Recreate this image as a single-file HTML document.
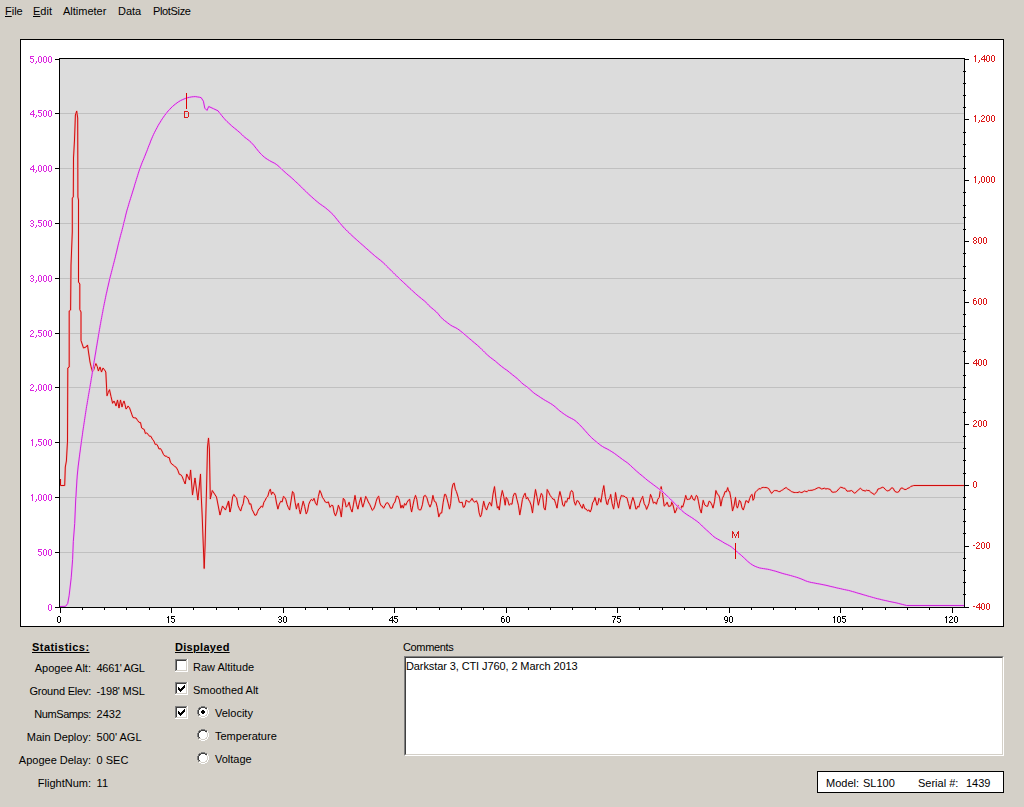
<!DOCTYPE html>
<html><head><meta charset="utf-8"><title>Altimeter</title>
<style>
html,body{margin:0;padding:0;}
body{width:1024px;height:807px;overflow:hidden;position:relative;background:#d4d0c8;font-family:"Liberation Sans", sans-serif;font-size:11px;line-height:15px;color:#000;}
</style></head><body>
<div style="position:absolute;left:5px;top:4px;white-space:pre;"><u>F</u>ile</div>
<div style="position:absolute;left:33px;top:4px;white-space:pre;"><u>E</u>dit</div>
<div style="position:absolute;left:63px;top:4px;white-space:pre;">Altimeter</div>
<div style="position:absolute;left:118px;top:4px;white-space:pre;">Data</div>
<div style="position:absolute;left:153px;top:4px;white-space:pre;"><span style="letter-spacing:-0.35px">PlotSize</span></div>
<svg width="1024" height="807" style="position:absolute;left:0;top:0"><rect x="20.5" y="39.5" width="983" height="587" fill="#fff" stroke="#000" stroke-width="1" shape-rendering="crispEdges"/><rect x="59" y="58" width="905" height="549" fill="#dcdcdc"/><line x1="60" y1="552.5" x2="964" y2="552.5" stroke="#c0c0c0" stroke-width="1"/><line x1="60" y1="497.5" x2="964" y2="497.5" stroke="#c0c0c0" stroke-width="1"/><line x1="60" y1="442.5" x2="964" y2="442.5" stroke="#c0c0c0" stroke-width="1"/><line x1="60" y1="387.5" x2="964" y2="387.5" stroke="#c0c0c0" stroke-width="1"/><line x1="60" y1="333.5" x2="964" y2="333.5" stroke="#c0c0c0" stroke-width="1"/><line x1="60" y1="278.5" x2="964" y2="278.5" stroke="#c0c0c0" stroke-width="1"/><line x1="60" y1="223.5" x2="964" y2="223.5" stroke="#c0c0c0" stroke-width="1"/><line x1="60" y1="168.5" x2="964" y2="168.5" stroke="#c0c0c0" stroke-width="1"/><line x1="60" y1="113.5" x2="964" y2="113.5" stroke="#c0c0c0" stroke-width="1"/><path d="M60.5 479.0 L60.5 485.5 L64.7 485.5 L65.3 467.0 L66.4 461.0 L67.5 441.0 L67.8 368.0 L69.2 367.0 L69.2 311.0 L70.6 310.0 L71.0 265.0 L72.3 232.0 L72.3 198.0 L73.3 197.0 L73.5 158.0 L74.5 140.0 L75.4 115.0 L76.7 111.0 L77.7 118.0 L77.9 197.0 L78.5 200.0 L78.5 282.0 L79.8 284.0 L79.8 309.6 L81.0 312.0 L81.0 340.5 L83.5 348.0 L86.0 347.0 L87.5 345.0 L88.5 352.0 M88.5 352.0 L90.0 362.0 L91.1 366.8 L92.2 371.7 L93.4 370.9 L94.7 366.5 L95.9 363.6 L97.2 366.4 L98.4 371.0 L100.0 367.0 L101.5 372.0 L103.0 368.0 L104.6 370.0 L105.8 372.0 L107.0 395.8 L108.2 392.6 L109.5 389.7 L111.0 396.5 L112.6 403.3 L114.0 401.0 L115.0 403.1 L116.0 406.0 L117.5 400.0 L119.0 408.0 L120.5 400.0 L122.0 407.0 L123.0 403.2 L124.0 401.0 L125.0 404.5 L126.0 409.0 L127.0 408.1 L128.0 406.0 L129.5 407.8 L131.0 412.0 L132.0 414.9 L133.0 417.5 L134.5 417.8 L136.0 418.0 L137.5 420.3 L139.0 422.3 L140.5 422.5 L141.7 428.0 L142.9 428.8 L144.2 429.4 L145.4 433.5 L146.7 433.0 L148.1 434.3 L149.5 436.3 L150.9 436.3 L152.4 439.2 L153.8 440.9 L155.2 444.4 L156.6 444.2 L157.8 446.0 L159.0 449.0 L160.5 448.6 L161.9 450.9 L163.4 454.3 L164.9 456.1 L166.3 456.2 L167.8 457.4 L169.2 457.6 L170.5 462.3 L171.8 464.1 L173.2 465.0 L174.7 466.4 L176.2 467.3 L177.8 470.2 L179.3 474.3 L180.8 474.7 L182.3 476.8 L183.7 480.6 L185.2 484.0 M185.2 484.0 L186.7 474.0 L189.5 480.0 L190.6 470.0 L192.5 495.0 L195.0 478.0 L197.9 500.0 L200.5 474.0 L201.2 495.0 L202.2 516.0 L203.0 538.0 L204.2 568.5 L205.1 545.0 L205.7 521.0 L206.6 486.0 L207.5 447.0 L208.5 438.0 L209.4 449.0 L210.3 499.0 L212.3 490.5 L216.5 497.0 L220.0 515.0 L222.5 506.0 L225.5 510.0 L228.5 501.0 L230.0 512.0 M228.5 501.0 L230.0 512.0 L231.3 506.6 L232.6 496.9 L233.9 494.4 L235.3 496.8 L236.6 497.8 L238.0 505.5 L239.4 508.7 L240.7 511.0 L242.0 506.4 L243.2 503.7 L244.4 495.9 L245.6 496.4 L246.9 497.9 L248.2 499.8 L249.5 504.2 L250.8 503.8 L252.1 509.6 L253.4 512.0 L254.9 515.3 L256.4 514.9 L257.6 511.5 L258.8 509.0 L260.0 508.1 L261.2 506.1 L262.6 507.2 L263.9 502.2 L265.2 500.3 L266.5 497.5 L267.8 496.3 L269.1 491.5 L270.3 489.2 L271.5 494.5 L272.7 492.0 L273.9 493.4 L275.2 495.4 L276.5 503.0 L277.9 509.1 L279.3 504.1 L280.8 501.2 L282.1 502.0 L283.4 496.5 L284.7 497.3 L285.9 499.7 L287.1 504.5 L288.3 507.5 L289.6 510.0 L291.0 501.0 L292.5 491.5 L293.8 493.4 L295.1 502.2 L296.4 509.1 L297.4 504.5 L298.4 503.2 L299.3 509.6 L300.3 513.9 L301.8 507.2 L303.2 501.2 L304.7 506.6 L306.2 513.9 L307.5 511.3 L308.8 504.2 L310.1 501.2 L311.4 499.4 L312.7 500.7 L314.0 498.3 L315.4 502.9 L316.9 505.2 L318.4 496.4 L319.8 490.5 L321.1 493.1 L322.4 497.2 L323.8 499.3 L325.3 502.0 L326.9 502.6 L328.4 501.9 L330.0 507.3 L331.6 505.2 L332.9 505.7 L334.2 512.8 L335.5 515.9 L336.9 512.0 L338.4 505.2 L339.9 509.1 L341.3 516.9 L342.3 507.5 L343.3 498.3 L344.7 500.1 L346.2 507.1 L347.7 505.6 L349.1 502.2 L350.6 508.6 L352.1 512.0 L353.5 504.1 L355.0 495.4 L356.5 504.3 L357.9 509.1 L359.4 502.2 L360.9 497.3 L361.8 503.3 L362.8 507.1 L364.3 502.3 L365.7 496.4 L367.0 498.8 L368.3 502.0 L369.6 504.2 L371.0 507.3 L372.3 510.3 L373.6 509.1 L374.9 506.0 L376.2 501.2 L377.5 497.3 L378.7 496.2 L379.9 502.9 L381.1 505.7 L382.3 506.1 L383.6 508.2 L384.9 505.7 L386.2 503.2 L387.7 502.7 L389.2 505.0 L390.6 508.3 L392.1 508.1 L393.6 503.7 L395.0 502.0 L396.5 496.2 L398.0 496.4 L399.4 500.1 L400.9 508.1 L402.1 505.2 L403.3 508.1 L404.6 503.5 L405.8 505.2 L407.1 502.3 L408.4 500.2 L409.7 499.3 L410.7 507.7 L411.6 512.0 L412.9 505.5 L414.2 499.3 L415.5 495.4 L416.8 499.3 L418.2 508.5 L419.5 510.0 L420.9 509.7 L422.4 504.8 L423.8 496.3 L425.3 495.4 L426.9 497.8 L428.4 503.4 L430.0 507.1 L431.5 503.4 L432.9 495.4 L434.4 501.4 L435.9 502.2 L437.3 507.6 L438.8 516.9 L440.3 513.1 L441.7 513.0 L443.2 502.2 L444.6 494.4 L445.6 494.4 L446.6 497.3 L448.1 503.1 L449.5 509.1 L450.7 503.3 L451.9 489.0 L453.0 484.1 L454.2 483.1 L455.3 489.2 L456.4 491.5 L457.8 496.1 L459.3 502.2 L460.8 502.6 L462.2 502.2 L463.2 507.2 L464.2 507.1 L465.2 504.8 L466.1 500.3 L467.6 501.3 L469.1 502.2 L470.5 500.9 L472.0 498.3 L473.5 501.3 L474.9 502.2 L476.4 500.7 L477.9 504.2 L479.1 512.8 L480.4 516.9 L481.5 514.5 L482.6 507.3 L483.7 501.2 L485.2 507.3 L486.6 510.0 L488.1 505.5 L489.6 502.2 L490.5 503.6 L491.5 506.1 L493.0 494.1 L494.5 486.6 L495.9 498.1 L497.4 508.1 L498.4 506.6 L499.3 510.0 L500.8 497.9 L502.3 490.5 L503.7 496.2 L505.2 505.2 L506.2 497.3 L507.6 499.4 L509.1 505.2 L510.6 503.8 L512.0 504.2 L513.2 496.3 L514.4 493.4 L515.6 493.6 L516.9 499.3 L518.4 505.2 L519.8 514.9 L521.1 507.8 L522.4 499.5 L523.8 495.4 L525.1 493.2 L526.4 499.0 L527.7 497.3 L528.6 499.9 L529.6 501.2 L531.1 505.1 L532.5 513.0 L534.0 499.9 L535.5 489.5 L536.9 496.5 L538.4 505.2 L539.9 498.5 L541.3 493.4 L542.6 495.5 L543.9 507.8 L545.2 510.0 L546.2 502.5 L547.2 489.5 L548.7 492.3 L550.1 495.4 L551.6 497.3 L553.0 499.3 L554.3 499.2 L555.7 503.7 L557.0 508.1 L558.4 498.9 L559.9 491.5 L561.3 497.0 L562.8 505.2 L564.1 506.3 L565.4 501.1 L566.7 502.2 L567.9 497.8 L569.2 498.9 L570.4 492.4 L571.6 490.5 L572.9 492.2 L574.2 501.7 L575.5 505.2 L577.0 500.6 L578.4 501.2 L579.9 504.3 L581.4 507.1 L582.3 508.3 L583.3 504.2 L584.8 508.7 L586.2 509.1 L587.6 510.9 L588.9 509.9 L590.2 512.0 L591.4 509.1 L592.6 502.8 L593.8 501.0 L595.0 497.3 L596.0 501.4 L597.0 505.2 L598.0 503.3 L598.9 498.3 L599.9 499.3 L600.9 502.2 L602.4 492.4 L603.8 485.6 L605.3 496.6 L606.8 504.2 L607.7 504.5 L608.7 499.3 L609.7 498.8 L610.7 494.4 L612.1 503.5 L613.6 509.1 L614.6 502.5 L615.5 492.5 L617.0 501.6 L618.5 508.1 L619.9 500.2 L621.4 495.4 L622.7 496.0 L624.0 496.0 L625.3 497.3 L626.9 497.6 L628.4 503.5 L630.0 509.1 L631.5 502.0 L632.9 497.3 L634.4 501.9 L635.9 509.1 L636.8 508.7 L637.8 506.1 L638.8 507.2 L639.8 503.2 L641.2 499.5 L642.7 496.4 L644.2 503.7 L645.6 506.1 L646.6 509.4 L647.6 507.1 L649.0 503.3 L650.5 494.4 L652.0 498.1 L653.4 503.2 L654.9 502.1 L656.4 504.2 L657.8 499.2 L659.3 497.3 L660.3 490.3 L661.2 486.6 L662.7 494.7 L664.2 506.1 L665.6 504.9 L667.1 502.2 L668.6 506.4 L670.0 506.1 L671.0 505.6 L672.0 501.2 L673.5 507.0 L674.9 513.0 L676.4 509.9 L677.9 505.2 L679.3 508.8 L680.8 509.1 L681.8 505.8 L682.7 507.1 L684.2 502.1 L685.7 495.4 L687.1 499.6 L688.6 499.3 L690.1 498.9 L691.5 495.4 L693.0 499.2 L694.5 500.3 L695.4 497.7 L696.4 495.4 L697.4 496.5 L698.4 501.2 L699.8 508.7 L701.3 513.0 L702.3 505.7 L703.2 500.3 L704.7 504.9 L706.2 506.1 L707.6 506.3 L709.1 501.2 L710.1 501.6 L711.1 503.2 L712.0 505.1 L713.0 508.1 L714.5 501.8 L715.9 490.5 L717.4 494.2 L718.9 495.4 L719.8 498.9 L720.8 506.1 L722.3 498.7 L723.8 495.4 L725.1 491.5 L726.4 491.8 L727.7 487.6 L728.6 491.2 L729.6 491.5 L731.1 499.3 L732.5 511.0 L734.0 506.0 L735.5 497.3 L736.4 505.4 L737.4 508.1 L738.4 505.1 L739.4 500.3 L740.7 501.9 L742.0 507.9 L743.3 510.0 L744.6 505.8 L745.9 500.7 L747.2 501.2 L748.4 502.9 L749.6 498.7 L750.8 495.6 L752.1 494.4 L753.0 500.3 L754.0 498.8 L755.0 492.5 L756.3 491.4 L757.6 490.1 L758.9 488.6 L760.4 488.9 L761.8 487.7 L763.3 487.4 L764.8 487.6 L766.1 487.5 L767.4 487.9 L768.7 488.6 L770.1 491.1 L771.6 493.4 L773.1 491.6 L774.5 490.5 L775.8 490.6 L777.1 490.7 L778.4 491.5 L779.9 491.6 L781.4 490.5 L782.6 489.9 L783.8 489.0 L785.0 488.1 L786.2 487.6 L787.6 488.9 L788.9 489.7 L790.2 490.5 L791.5 491.6 L792.8 492.0 L794.1 492.5 L795.4 492.5 L796.7 492.5 L798.0 492.5 L799.3 491.8 L800.6 492.4 L801.9 492.5 L803.2 491.8 L804.5 491.0 L805.8 491.5 L807.1 491.7 L808.4 490.3 L809.7 490.5 L810.9 490.3 L812.1 490.3 L813.3 489.8 L814.6 489.5 L815.9 488.8 L817.2 488.1 L818.5 487.6 L820.0 487.9 L821.4 488.9 L822.9 488.7 L824.4 488.2 L825.9 489.0 L827.3 488.6 L828.8 489.0 L830.3 489.5 L831.7 491.8 L833.2 492.3 L834.3 492.1 L835.4 492.0 L836.7 491.4 L837.9 490.0 L839.2 488.5 L840.5 487.3 L842.0 487.5 L843.4 488.2 L844.9 488.3 L846.0 489.8 L847.1 491.2 L848.6 491.1 L850.0 491.0 L851.5 490.5 L853.0 491.8 L854.4 493.1 L855.9 492.5 L857.4 490.7 L858.8 489.6 L860.3 488.3 L861.5 489.1 L862.7 490.5 L863.9 490.5 L865.2 491.1 L866.5 490.2 L867.8 490.6 L869.1 490.5 L870.4 491.7 L871.6 493.0 L872.9 493.5 L874.2 494.6 L875.5 493.2 L876.8 491.6 L878.0 489.0 L879.3 488.7 L880.8 488.1 L882.3 487.3 L883.7 487.6 L885.2 489.3 L886.6 490.5 L887.7 490.9 L888.8 490.5 L889.9 490.0 L891.0 488.3 L892.1 487.8 L893.2 488.3 L894.7 491.2 L896.2 492.1 L897.6 492.3 L899.1 491.4 L900.6 488.5 L902.0 487.9 L903.5 488.8 L905.0 489.6 L906.4 489.3 L907.9 488.2 L909.4 487.8 L910.8 486.4 L912.3 486.0 L913.7 485.5 L964.0 485.5" fill="none" stroke="#f0b8b8" stroke-width="2" stroke-linejoin="round"/><path d="M60.5 479.0 L60.5 485.5 L64.7 485.5 L65.3 467.0 L66.4 461.0 L67.5 441.0 L67.8 368.0 L69.2 367.0 L69.2 311.0 L70.6 310.0 L71.0 265.0 L72.3 232.0 L72.3 198.0 L73.3 197.0 L73.5 158.0 L74.5 140.0 L75.4 115.0 L76.7 111.0 L77.7 118.0 L77.9 197.0 L78.5 200.0 L78.5 282.0 L79.8 284.0 L79.8 309.6 L81.0 312.0 L81.0 340.5 L83.5 348.0 L86.0 347.0 L87.5 345.0 L88.5 352.0 M88.5 352.0 L90.0 362.0 L91.1 366.8 L92.2 371.7 L93.4 370.9 L94.7 366.5 L95.9 363.6 L97.2 366.4 L98.4 371.0 L100.0 367.0 L101.5 372.0 L103.0 368.0 L104.6 370.0 L105.8 372.0 L107.0 395.8 L108.2 392.6 L109.5 389.7 L111.0 396.5 L112.6 403.3 L114.0 401.0 L115.0 403.1 L116.0 406.0 L117.5 400.0 L119.0 408.0 L120.5 400.0 L122.0 407.0 L123.0 403.2 L124.0 401.0 L125.0 404.5 L126.0 409.0 L127.0 408.1 L128.0 406.0 L129.5 407.8 L131.0 412.0 L132.0 414.9 L133.0 417.5 L134.5 417.8 L136.0 418.0 L137.5 420.3 L139.0 422.3 L140.5 422.5 L141.7 428.0 L142.9 428.8 L144.2 429.4 L145.4 433.5 L146.7 433.0 L148.1 434.3 L149.5 436.3 L150.9 436.3 L152.4 439.2 L153.8 440.9 L155.2 444.4 L156.6 444.2 L157.8 446.0 L159.0 449.0 L160.5 448.6 L161.9 450.9 L163.4 454.3 L164.9 456.1 L166.3 456.2 L167.8 457.4 L169.2 457.6 L170.5 462.3 L171.8 464.1 L173.2 465.0 L174.7 466.4 L176.2 467.3 L177.8 470.2 L179.3 474.3 L180.8 474.7 L182.3 476.8 L183.7 480.6 L185.2 484.0 M185.2 484.0 L186.7 474.0 L189.5 480.0 L190.6 470.0 L192.5 495.0 L195.0 478.0 L197.9 500.0 L200.5 474.0 L201.2 495.0 L202.2 516.0 L203.0 538.0 L204.2 568.5 L205.1 545.0 L205.7 521.0 L206.6 486.0 L207.5 447.0 L208.5 438.0 L209.4 449.0 L210.3 499.0 L212.3 490.5 L216.5 497.0 L220.0 515.0 L222.5 506.0 L225.5 510.0 L228.5 501.0 L230.0 512.0 M228.5 501.0 L230.0 512.0 L231.3 506.6 L232.6 496.9 L233.9 494.4 L235.3 496.8 L236.6 497.8 L238.0 505.5 L239.4 508.7 L240.7 511.0 L242.0 506.4 L243.2 503.7 L244.4 495.9 L245.6 496.4 L246.9 497.9 L248.2 499.8 L249.5 504.2 L250.8 503.8 L252.1 509.6 L253.4 512.0 L254.9 515.3 L256.4 514.9 L257.6 511.5 L258.8 509.0 L260.0 508.1 L261.2 506.1 L262.6 507.2 L263.9 502.2 L265.2 500.3 L266.5 497.5 L267.8 496.3 L269.1 491.5 L270.3 489.2 L271.5 494.5 L272.7 492.0 L273.9 493.4 L275.2 495.4 L276.5 503.0 L277.9 509.1 L279.3 504.1 L280.8 501.2 L282.1 502.0 L283.4 496.5 L284.7 497.3 L285.9 499.7 L287.1 504.5 L288.3 507.5 L289.6 510.0 L291.0 501.0 L292.5 491.5 L293.8 493.4 L295.1 502.2 L296.4 509.1 L297.4 504.5 L298.4 503.2 L299.3 509.6 L300.3 513.9 L301.8 507.2 L303.2 501.2 L304.7 506.6 L306.2 513.9 L307.5 511.3 L308.8 504.2 L310.1 501.2 L311.4 499.4 L312.7 500.7 L314.0 498.3 L315.4 502.9 L316.9 505.2 L318.4 496.4 L319.8 490.5 L321.1 493.1 L322.4 497.2 L323.8 499.3 L325.3 502.0 L326.9 502.6 L328.4 501.9 L330.0 507.3 L331.6 505.2 L332.9 505.7 L334.2 512.8 L335.5 515.9 L336.9 512.0 L338.4 505.2 L339.9 509.1 L341.3 516.9 L342.3 507.5 L343.3 498.3 L344.7 500.1 L346.2 507.1 L347.7 505.6 L349.1 502.2 L350.6 508.6 L352.1 512.0 L353.5 504.1 L355.0 495.4 L356.5 504.3 L357.9 509.1 L359.4 502.2 L360.9 497.3 L361.8 503.3 L362.8 507.1 L364.3 502.3 L365.7 496.4 L367.0 498.8 L368.3 502.0 L369.6 504.2 L371.0 507.3 L372.3 510.3 L373.6 509.1 L374.9 506.0 L376.2 501.2 L377.5 497.3 L378.7 496.2 L379.9 502.9 L381.1 505.7 L382.3 506.1 L383.6 508.2 L384.9 505.7 L386.2 503.2 L387.7 502.7 L389.2 505.0 L390.6 508.3 L392.1 508.1 L393.6 503.7 L395.0 502.0 L396.5 496.2 L398.0 496.4 L399.4 500.1 L400.9 508.1 L402.1 505.2 L403.3 508.1 L404.6 503.5 L405.8 505.2 L407.1 502.3 L408.4 500.2 L409.7 499.3 L410.7 507.7 L411.6 512.0 L412.9 505.5 L414.2 499.3 L415.5 495.4 L416.8 499.3 L418.2 508.5 L419.5 510.0 L420.9 509.7 L422.4 504.8 L423.8 496.3 L425.3 495.4 L426.9 497.8 L428.4 503.4 L430.0 507.1 L431.5 503.4 L432.9 495.4 L434.4 501.4 L435.9 502.2 L437.3 507.6 L438.8 516.9 L440.3 513.1 L441.7 513.0 L443.2 502.2 L444.6 494.4 L445.6 494.4 L446.6 497.3 L448.1 503.1 L449.5 509.1 L450.7 503.3 L451.9 489.0 L453.0 484.1 L454.2 483.1 L455.3 489.2 L456.4 491.5 L457.8 496.1 L459.3 502.2 L460.8 502.6 L462.2 502.2 L463.2 507.2 L464.2 507.1 L465.2 504.8 L466.1 500.3 L467.6 501.3 L469.1 502.2 L470.5 500.9 L472.0 498.3 L473.5 501.3 L474.9 502.2 L476.4 500.7 L477.9 504.2 L479.1 512.8 L480.4 516.9 L481.5 514.5 L482.6 507.3 L483.7 501.2 L485.2 507.3 L486.6 510.0 L488.1 505.5 L489.6 502.2 L490.5 503.6 L491.5 506.1 L493.0 494.1 L494.5 486.6 L495.9 498.1 L497.4 508.1 L498.4 506.6 L499.3 510.0 L500.8 497.9 L502.3 490.5 L503.7 496.2 L505.2 505.2 L506.2 497.3 L507.6 499.4 L509.1 505.2 L510.6 503.8 L512.0 504.2 L513.2 496.3 L514.4 493.4 L515.6 493.6 L516.9 499.3 L518.4 505.2 L519.8 514.9 L521.1 507.8 L522.4 499.5 L523.8 495.4 L525.1 493.2 L526.4 499.0 L527.7 497.3 L528.6 499.9 L529.6 501.2 L531.1 505.1 L532.5 513.0 L534.0 499.9 L535.5 489.5 L536.9 496.5 L538.4 505.2 L539.9 498.5 L541.3 493.4 L542.6 495.5 L543.9 507.8 L545.2 510.0 L546.2 502.5 L547.2 489.5 L548.7 492.3 L550.1 495.4 L551.6 497.3 L553.0 499.3 L554.3 499.2 L555.7 503.7 L557.0 508.1 L558.4 498.9 L559.9 491.5 L561.3 497.0 L562.8 505.2 L564.1 506.3 L565.4 501.1 L566.7 502.2 L567.9 497.8 L569.2 498.9 L570.4 492.4 L571.6 490.5 L572.9 492.2 L574.2 501.7 L575.5 505.2 L577.0 500.6 L578.4 501.2 L579.9 504.3 L581.4 507.1 L582.3 508.3 L583.3 504.2 L584.8 508.7 L586.2 509.1 L587.6 510.9 L588.9 509.9 L590.2 512.0 L591.4 509.1 L592.6 502.8 L593.8 501.0 L595.0 497.3 L596.0 501.4 L597.0 505.2 L598.0 503.3 L598.9 498.3 L599.9 499.3 L600.9 502.2 L602.4 492.4 L603.8 485.6 L605.3 496.6 L606.8 504.2 L607.7 504.5 L608.7 499.3 L609.7 498.8 L610.7 494.4 L612.1 503.5 L613.6 509.1 L614.6 502.5 L615.5 492.5 L617.0 501.6 L618.5 508.1 L619.9 500.2 L621.4 495.4 L622.7 496.0 L624.0 496.0 L625.3 497.3 L626.9 497.6 L628.4 503.5 L630.0 509.1 L631.5 502.0 L632.9 497.3 L634.4 501.9 L635.9 509.1 L636.8 508.7 L637.8 506.1 L638.8 507.2 L639.8 503.2 L641.2 499.5 L642.7 496.4 L644.2 503.7 L645.6 506.1 L646.6 509.4 L647.6 507.1 L649.0 503.3 L650.5 494.4 L652.0 498.1 L653.4 503.2 L654.9 502.1 L656.4 504.2 L657.8 499.2 L659.3 497.3 L660.3 490.3 L661.2 486.6 L662.7 494.7 L664.2 506.1 L665.6 504.9 L667.1 502.2 L668.6 506.4 L670.0 506.1 L671.0 505.6 L672.0 501.2 L673.5 507.0 L674.9 513.0 L676.4 509.9 L677.9 505.2 L679.3 508.8 L680.8 509.1 L681.8 505.8 L682.7 507.1 L684.2 502.1 L685.7 495.4 L687.1 499.6 L688.6 499.3 L690.1 498.9 L691.5 495.4 L693.0 499.2 L694.5 500.3 L695.4 497.7 L696.4 495.4 L697.4 496.5 L698.4 501.2 L699.8 508.7 L701.3 513.0 L702.3 505.7 L703.2 500.3 L704.7 504.9 L706.2 506.1 L707.6 506.3 L709.1 501.2 L710.1 501.6 L711.1 503.2 L712.0 505.1 L713.0 508.1 L714.5 501.8 L715.9 490.5 L717.4 494.2 L718.9 495.4 L719.8 498.9 L720.8 506.1 L722.3 498.7 L723.8 495.4 L725.1 491.5 L726.4 491.8 L727.7 487.6 L728.6 491.2 L729.6 491.5 L731.1 499.3 L732.5 511.0 L734.0 506.0 L735.5 497.3 L736.4 505.4 L737.4 508.1 L738.4 505.1 L739.4 500.3 L740.7 501.9 L742.0 507.9 L743.3 510.0 L744.6 505.8 L745.9 500.7 L747.2 501.2 L748.4 502.9 L749.6 498.7 L750.8 495.6 L752.1 494.4 L753.0 500.3 L754.0 498.8 L755.0 492.5 L756.3 491.4 L757.6 490.1 L758.9 488.6 L760.4 488.9 L761.8 487.7 L763.3 487.4 L764.8 487.6 L766.1 487.5 L767.4 487.9 L768.7 488.6 L770.1 491.1 L771.6 493.4 L773.1 491.6 L774.5 490.5 L775.8 490.6 L777.1 490.7 L778.4 491.5 L779.9 491.6 L781.4 490.5 L782.6 489.9 L783.8 489.0 L785.0 488.1 L786.2 487.6 L787.6 488.9 L788.9 489.7 L790.2 490.5 L791.5 491.6 L792.8 492.0 L794.1 492.5 L795.4 492.5 L796.7 492.5 L798.0 492.5 L799.3 491.8 L800.6 492.4 L801.9 492.5 L803.2 491.8 L804.5 491.0 L805.8 491.5 L807.1 491.7 L808.4 490.3 L809.7 490.5 L810.9 490.3 L812.1 490.3 L813.3 489.8 L814.6 489.5 L815.9 488.8 L817.2 488.1 L818.5 487.6 L820.0 487.9 L821.4 488.9 L822.9 488.7 L824.4 488.2 L825.9 489.0 L827.3 488.6 L828.8 489.0 L830.3 489.5 L831.7 491.8 L833.2 492.3 L834.3 492.1 L835.4 492.0 L836.7 491.4 L837.9 490.0 L839.2 488.5 L840.5 487.3 L842.0 487.5 L843.4 488.2 L844.9 488.3 L846.0 489.8 L847.1 491.2 L848.6 491.1 L850.0 491.0 L851.5 490.5 L853.0 491.8 L854.4 493.1 L855.9 492.5 L857.4 490.7 L858.8 489.6 L860.3 488.3 L861.5 489.1 L862.7 490.5 L863.9 490.5 L865.2 491.1 L866.5 490.2 L867.8 490.6 L869.1 490.5 L870.4 491.7 L871.6 493.0 L872.9 493.5 L874.2 494.6 L875.5 493.2 L876.8 491.6 L878.0 489.0 L879.3 488.7 L880.8 488.1 L882.3 487.3 L883.7 487.6 L885.2 489.3 L886.6 490.5 L887.7 490.9 L888.8 490.5 L889.9 490.0 L891.0 488.3 L892.1 487.8 L893.2 488.3 L894.7 491.2 L896.2 492.1 L897.6 492.3 L899.1 491.4 L900.6 488.5 L902.0 487.9 L903.5 488.8 L905.0 489.6 L906.4 489.3 L907.9 488.2 L909.4 487.8 L910.8 486.4 L912.3 486.0 L913.7 485.5 L964.0 485.5" fill="none" stroke="#d00c0c" stroke-width="1" stroke-linejoin="round"/><path d="M60.0 606.5 L65.6 606.3 L67.7 603.5 L69.1 595.8 L71.2 577.8 L72.6 559.7 L73.3 541.7 L74.7 523.6 L75.6 502.0 L75.7 500.0 L75.8 498.0 L76.0 496.0 L76.1 494.0 L76.2 492.0 L76.3 490.0 L76.4 488.0 L76.6 486.0 L76.7 484.0 L76.8 482.0 L76.9 480.0 L77.1 478.0 L77.2 476.0 L77.4 474.0 L77.6 472.0 L77.8 470.0 L78.0 468.0 L78.2 466.0 L78.5 464.0 L78.7 462.0 L79.0 460.0 L79.2 458.0 L79.5 456.1 L79.7 454.1 L80.0 452.1 L80.3 450.1 L80.5 448.1 L80.8 446.1 L81.1 444.1 L81.3 442.1 L81.6 440.2 L81.9 438.2 L82.2 436.2 L82.5 434.2 L82.7 432.2 L83.0 430.2 L83.3 428.2 L83.6 426.3 L83.9 424.3 L84.2 422.3 L84.5 420.3 L84.8 418.3 L85.1 416.3 L85.4 414.4 L85.7 412.4 L86.0 410.4 L86.3 408.4 L86.6 406.4 L87.0 404.5 L87.3 402.5 L87.6 400.5 L88.0 398.5 L88.3 396.5 L88.6 394.6 L89.0 392.6 L89.3 390.6 L89.7 388.6 L90.0 386.7 L90.3 384.7 L90.7 382.7 L91.0 380.7 L91.3 378.7 L91.7 376.8 L92.0 374.8 L92.3 372.8 L92.6 370.8 L92.9 368.8 L93.3 366.9 L93.6 364.9 L93.9 362.9 L94.2 360.9 L94.6 359.0 L94.9 357.0 L95.2 355.0 L95.6 353.0 L95.9 351.0 L96.2 349.1 L96.5 347.1 L96.9 345.1 L97.2 343.1 L97.5 341.1 L97.9 339.2 L98.2 337.2 L98.5 335.2 L98.9 333.2 L99.2 331.3 L99.5 329.3 L99.9 327.3 L100.2 325.3 L100.6 323.4 L100.9 321.4 L101.3 319.4 L101.7 317.4 L102.0 315.5 L102.4 313.5 L102.8 311.5 L103.1 309.5 L103.5 307.6 L103.9 305.6 L104.3 303.6 L104.7 301.7 L105.1 299.7 L105.5 297.7 L105.9 295.8 L106.3 293.8 L106.8 291.9 L107.2 289.9 L107.6 287.9 L108.1 286.0 L108.5 284.0 L109.0 282.1 L109.4 280.1 L109.9 278.2 L110.4 276.2 L110.9 274.3 L111.4 272.4 L111.9 270.4 L112.4 268.5 L112.9 266.5 L113.4 264.6 L113.9 262.7 L114.4 260.7 L114.9 258.8 L115.4 256.8 L115.8 254.9 L116.3 252.9 L116.8 251.0 L117.2 249.0 L117.7 247.1 L118.1 245.1 L118.6 243.2 L119.1 241.2 L119.6 239.3 L120.1 237.3 L120.6 235.4 L121.1 233.5 L121.7 231.5 L122.2 229.6 L122.7 227.6 L123.2 225.7 L123.6 223.7 L124.1 221.8 L124.6 219.8 L125.1 217.9 L125.5 215.9 L126.0 214.0 L126.5 212.1 L127.0 210.1 L127.6 208.2 L128.2 206.3 L128.7 204.4 L129.3 202.4 L129.9 200.5 L130.5 198.6 L131.1 196.7 L131.7 194.8 L132.3 192.9 L132.9 190.9 L133.5 189.0 L134.1 187.1 L134.6 185.2 L135.2 183.3 L135.8 181.4 L136.4 179.4 L137.0 177.5 L137.6 175.6 L138.2 173.7 L138.8 171.8 L139.4 169.9 L140.1 168.0 L140.8 166.1 L141.5 164.2 L142.2 162.4 L143.0 160.5 L143.8 158.7 L144.5 156.8 L145.3 155.0 L146.0 153.1 L146.8 151.2 L147.5 149.4 L148.2 147.5 L148.9 145.6 L149.7 143.8 L150.4 141.9 L151.1 140.0 L151.9 138.2 L152.7 136.3 L153.5 134.5 L154.4 132.7 L155.3 130.9 L156.2 129.2 L157.2 127.4 L158.1 125.6 L159.1 123.9 L160.2 122.2 L161.2 120.5 L162.3 118.8 L163.4 117.2 L164.6 115.5 L165.8 113.9 L167.0 112.4 L168.3 110.8 L169.7 109.4 L171.0 107.9 L172.5 106.5 L174.0 105.2 L175.5 104.0 L177.1 102.8 L178.7 101.7 L180.4 100.7 L182.2 99.8 L184.0 99.0 L185.8 98.3 L187.7 97.7 L189.6 97.3 L191.5 96.9 L193.4 96.7 L195.3 96.6 L197.3 96.9 L199.3 97.2 L201.2 97.7 L203.4 101.2 L204.8 108.2 L207.0 110.4 L208.7 106.5 L213.5 108.7 L218.0 110.8 L219.2 112.4 L220.5 114.0 L221.7 115.5 L223.0 117.1 L224.3 118.6 L225.6 120.1 L227.0 121.5 L228.5 122.9 L229.9 124.2 L231.4 125.6 L232.9 126.9 L234.5 128.2 L236.0 129.4 L237.6 130.7 L239.1 132.0 L240.6 133.3 L242.0 134.7 L243.4 136.1 L244.9 137.4 L246.5 138.6 L248.1 139.8 L249.6 141.0 L251.1 142.4 L252.4 143.8 L253.8 145.3 L255.0 146.9 L256.3 148.5 L257.5 150.0 L258.8 151.6 L260.1 153.1 L261.5 154.5 L262.9 155.9 L264.4 157.2 L266.0 158.4 L267.7 159.5 L269.4 160.5 L271.1 161.5 L272.9 162.4 L274.7 163.3 L276.3 164.4 L277.9 165.6 L279.3 166.9 L280.8 168.3 L282.2 169.7 L283.7 171.0 L285.2 172.4 L286.7 173.7 L288.2 175.0 L289.8 176.3 L291.3 177.6 L292.8 178.9 L294.2 180.3 L295.7 181.7 L297.2 183.0 L298.6 184.4 L300.1 185.8 L301.5 187.2 L302.9 188.6 L304.3 190.0 L305.8 191.4 L307.2 192.8 L308.7 194.2 L310.1 195.5 L311.6 196.8 L313.1 198.2 L314.6 199.5 L316.1 200.8 L317.7 202.1 L319.2 203.4 L320.8 204.5 L322.5 205.7 L324.1 206.8 L325.7 208.0 L327.2 209.3 L328.8 210.6 L330.2 211.9 L331.7 213.3 L333.1 214.7 L334.4 216.2 L335.7 217.8 L336.9 219.3 L338.2 220.9 L339.4 222.5 L340.7 224.0 L342.0 225.5 L343.3 227.0 L344.7 228.5 L346.1 229.9 L347.5 231.3 L349.0 232.7 L350.4 234.1 L351.9 235.5 L353.3 236.8 L354.8 238.2 L356.3 239.5 L357.8 240.8 L359.3 242.2 L360.8 243.5 L362.3 244.8 L363.8 246.1 L365.3 247.5 L366.8 248.8 L368.3 250.1 L369.8 251.5 L371.3 252.8 L372.8 254.1 L374.3 255.4 L375.8 256.7 L377.4 257.9 L379.0 259.2 L380.6 260.4 L382.1 261.7 L383.6 263.0 L385.0 264.4 L386.4 265.8 L387.8 267.2 L389.3 268.7 L390.7 270.1 L392.1 271.5 L393.5 272.9 L394.9 274.3 L396.4 275.7 L397.8 277.1 L399.3 278.5 L400.7 279.8 L402.2 281.2 L403.7 282.6 L405.1 283.9 L406.6 285.3 L408.0 286.7 L409.5 288.0 L411.0 289.4 L412.4 290.8 L413.9 292.1 L415.4 293.5 L416.9 294.8 L418.4 296.1 L420.0 297.4 L421.5 298.6 L423.1 299.9 L424.6 301.1 L426.1 302.5 L427.5 303.9 L428.8 305.4 L430.3 306.8 L431.8 308.1 L433.3 309.3 L434.8 310.6 L436.3 311.9 L437.7 313.3 L438.9 314.8 L440.2 316.4 L441.5 317.8 L442.9 319.2 L444.5 320.5 L446.1 321.7 L447.6 322.9 L449.2 324.1 L450.7 325.2 L452.4 326.2 L454.1 327.0 L455.8 327.8 L457.5 328.8 L459.1 329.9 L460.7 331.2 L462.2 332.4 L463.8 333.7 L465.3 335.0 L466.8 336.3 L468.3 337.6 L469.8 338.9 L471.4 340.2 L472.9 341.5 L474.4 342.8 L476.0 344.1 L477.5 345.4 L479.0 346.7 L480.5 348.1 L481.9 349.5 L483.3 350.9 L484.7 352.3 L486.1 353.7 L487.6 355.1 L489.1 356.4 L490.6 357.6 L492.2 358.8 L493.8 360.0 L495.4 361.2 L496.9 362.5 L498.4 363.8 L500.0 365.2 L501.5 366.4 L503.1 367.6 L504.7 368.8 L506.4 369.9 L508.0 371.1 L509.5 372.4 L511.1 373.6 L512.6 374.9 L514.2 376.1 L515.8 377.4 L517.3 378.6 L518.8 380.0 L520.2 381.4 L521.5 382.7 L523.0 384.0 L524.6 385.2 L526.2 386.3 L527.8 387.5 L529.3 388.8 L530.8 390.2 L532.2 391.5 L533.7 392.8 L535.3 394.0 L537.0 395.1 L538.7 396.2 L540.3 397.3 L542.0 398.4 L543.7 399.5 L545.4 400.5 L547.2 401.5 L548.9 402.5 L550.6 403.5 L552.3 404.6 L553.9 405.8 L555.4 407.0 L556.9 408.4 L558.4 409.7 L559.9 411.0 L561.5 412.2 L563.1 413.4 L564.7 414.5 L566.4 415.6 L568.1 416.7 L569.8 417.6 L571.6 418.5 L573.3 419.4 L575.0 420.5 L576.5 421.8 L578.0 423.1 L579.4 424.5 L580.8 426.0 L582.2 427.4 L583.5 428.9 L584.8 430.4 L586.2 431.9 L587.5 433.4 L588.8 434.9 L590.2 436.3 L591.6 437.7 L593.1 439.1 L594.6 440.4 L596.2 441.7 L597.7 442.9 L599.3 444.2 L600.8 445.4 L602.5 446.5 L604.2 447.5 L606.0 448.4 L607.8 449.3 L609.5 450.3 L611.2 451.3 L612.9 452.4 L614.6 453.5 L616.2 454.7 L617.8 455.9 L619.4 457.1 L621.0 458.3 L622.6 459.5 L624.2 460.6 L625.9 461.8 L627.5 462.9 L629.0 464.2 L630.5 465.5 L632.0 466.9 L633.4 468.3 L634.9 469.6 L636.4 471.0 L637.9 472.3 L639.4 473.6 L641.0 474.9 L642.5 476.1 L644.0 477.4 L645.6 478.7 L647.1 480.0 L648.7 481.2 L650.3 482.4 L651.9 483.6 L653.5 484.8 L655.1 486.0 L656.7 487.2 L658.3 488.4 L659.9 489.6 L661.5 490.9 L663.0 492.1 L664.5 493.5 L666.0 494.8 L667.4 496.2 L668.8 497.6 L670.3 499.0 L671.7 500.4 L673.1 501.8 L674.5 503.3 L675.9 504.7 L677.3 506.1 L678.7 507.5 L680.2 508.9 L681.6 510.3 L683.1 511.7 L684.6 512.9 L686.2 514.1 L687.9 515.2 L689.6 516.3 L691.3 517.3 L692.9 518.4 L694.6 519.6 L696.2 520.7 L697.8 521.9 L699.3 523.2 L700.8 524.6 L702.2 526.0 L703.7 527.4 L705.1 528.7 L706.6 530.1 L708.1 531.4 L709.6 532.8 L711.0 534.1 L712.5 535.5 L714.0 536.8 L715.6 537.9 L717.3 538.9 L719.0 539.8 L720.8 540.8 L722.5 541.8 L724.1 542.9 L725.9 543.8 L727.6 544.7 L729.4 545.7 L731.1 546.7 L732.6 547.9 L734.1 549.2 L735.6 550.5 L737.1 551.8 L738.6 553.1 L740.2 554.4 L741.7 555.7 L743.2 557.1 L744.6 558.4 L746.1 559.8 L747.5 561.2 L749.1 562.5 L750.6 563.7 L752.3 564.8 L754.0 565.8 L755.8 566.6 L757.6 567.3 L759.5 567.9 L761.5 568.3 L763.5 568.6 L765.4 568.9 L767.4 569.2 L769.4 569.6 L771.3 570.1 L773.2 570.6 L775.2 571.1 L777.1 571.7 L779.0 572.3 L780.9 572.9 L782.8 573.5 L784.7 574.0 L786.7 574.5 L788.6 575.0 L790.5 575.5 L792.5 576.1 L794.4 576.6 L796.3 577.2 L798.2 577.8 L800.1 578.5 L801.9 579.2 L803.8 580.0 L805.6 580.8 L807.5 581.5 L809.4 582.0 L811.3 582.5 L813.3 582.8 L815.2 583.2 L817.2 583.6 L819.2 583.9 L821.1 584.3 L823.1 584.7 L825.1 585.1 L827.0 585.5 L829.0 586.0 L830.9 586.5 L832.9 586.9 L834.8 587.4 L836.8 587.9 L838.7 588.3 L840.7 588.7 L842.6 589.2 L844.6 589.6 L846.5 590.0 L848.5 590.4 L850.4 590.9 L852.4 591.5 L854.3 592.0 L856.2 592.6 L858.1 593.2 L860.0 593.7 L862.0 594.3 L863.9 594.9 L865.8 595.4 L867.7 596.0 L869.6 596.5 L871.6 597.1 L873.5 597.6 L875.4 598.2 L877.4 598.7 L879.3 599.1 L881.3 599.6 L883.2 600.1 L885.2 600.5 L887.1 600.9 L889.1 601.4 L891.0 601.8 L893.0 602.2 L894.9 602.6 L896.9 603.0 L898.8 603.5 L900.8 604.0 L902.7 604.5 L904.7 605.0 L906.6 605.5 L964.0 605.5" fill="none" stroke="#f0b8f0" stroke-width="2" stroke-linejoin="round"/><path d="M60.0 606.5 L65.6 606.3 L67.7 603.5 L69.1 595.8 L71.2 577.8 L72.6 559.7 L73.3 541.7 L74.7 523.6 L75.6 502.0 L75.7 500.0 L75.8 498.0 L76.0 496.0 L76.1 494.0 L76.2 492.0 L76.3 490.0 L76.4 488.0 L76.6 486.0 L76.7 484.0 L76.8 482.0 L76.9 480.0 L77.1 478.0 L77.2 476.0 L77.4 474.0 L77.6 472.0 L77.8 470.0 L78.0 468.0 L78.2 466.0 L78.5 464.0 L78.7 462.0 L79.0 460.0 L79.2 458.0 L79.5 456.1 L79.7 454.1 L80.0 452.1 L80.3 450.1 L80.5 448.1 L80.8 446.1 L81.1 444.1 L81.3 442.1 L81.6 440.2 L81.9 438.2 L82.2 436.2 L82.5 434.2 L82.7 432.2 L83.0 430.2 L83.3 428.2 L83.6 426.3 L83.9 424.3 L84.2 422.3 L84.5 420.3 L84.8 418.3 L85.1 416.3 L85.4 414.4 L85.7 412.4 L86.0 410.4 L86.3 408.4 L86.6 406.4 L87.0 404.5 L87.3 402.5 L87.6 400.5 L88.0 398.5 L88.3 396.5 L88.6 394.6 L89.0 392.6 L89.3 390.6 L89.7 388.6 L90.0 386.7 L90.3 384.7 L90.7 382.7 L91.0 380.7 L91.3 378.7 L91.7 376.8 L92.0 374.8 L92.3 372.8 L92.6 370.8 L92.9 368.8 L93.3 366.9 L93.6 364.9 L93.9 362.9 L94.2 360.9 L94.6 359.0 L94.9 357.0 L95.2 355.0 L95.6 353.0 L95.9 351.0 L96.2 349.1 L96.5 347.1 L96.9 345.1 L97.2 343.1 L97.5 341.1 L97.9 339.2 L98.2 337.2 L98.5 335.2 L98.9 333.2 L99.2 331.3 L99.5 329.3 L99.9 327.3 L100.2 325.3 L100.6 323.4 L100.9 321.4 L101.3 319.4 L101.7 317.4 L102.0 315.5 L102.4 313.5 L102.8 311.5 L103.1 309.5 L103.5 307.6 L103.9 305.6 L104.3 303.6 L104.7 301.7 L105.1 299.7 L105.5 297.7 L105.9 295.8 L106.3 293.8 L106.8 291.9 L107.2 289.9 L107.6 287.9 L108.1 286.0 L108.5 284.0 L109.0 282.1 L109.4 280.1 L109.9 278.2 L110.4 276.2 L110.9 274.3 L111.4 272.4 L111.9 270.4 L112.4 268.5 L112.9 266.5 L113.4 264.6 L113.9 262.7 L114.4 260.7 L114.9 258.8 L115.4 256.8 L115.8 254.9 L116.3 252.9 L116.8 251.0 L117.2 249.0 L117.7 247.1 L118.1 245.1 L118.6 243.2 L119.1 241.2 L119.6 239.3 L120.1 237.3 L120.6 235.4 L121.1 233.5 L121.7 231.5 L122.2 229.6 L122.7 227.6 L123.2 225.7 L123.6 223.7 L124.1 221.8 L124.6 219.8 L125.1 217.9 L125.5 215.9 L126.0 214.0 L126.5 212.1 L127.0 210.1 L127.6 208.2 L128.2 206.3 L128.7 204.4 L129.3 202.4 L129.9 200.5 L130.5 198.6 L131.1 196.7 L131.7 194.8 L132.3 192.9 L132.9 190.9 L133.5 189.0 L134.1 187.1 L134.6 185.2 L135.2 183.3 L135.8 181.4 L136.4 179.4 L137.0 177.5 L137.6 175.6 L138.2 173.7 L138.8 171.8 L139.4 169.9 L140.1 168.0 L140.8 166.1 L141.5 164.2 L142.2 162.4 L143.0 160.5 L143.8 158.7 L144.5 156.8 L145.3 155.0 L146.0 153.1 L146.8 151.2 L147.5 149.4 L148.2 147.5 L148.9 145.6 L149.7 143.8 L150.4 141.9 L151.1 140.0 L151.9 138.2 L152.7 136.3 L153.5 134.5 L154.4 132.7 L155.3 130.9 L156.2 129.2 L157.2 127.4 L158.1 125.6 L159.1 123.9 L160.2 122.2 L161.2 120.5 L162.3 118.8 L163.4 117.2 L164.6 115.5 L165.8 113.9 L167.0 112.4 L168.3 110.8 L169.7 109.4 L171.0 107.9 L172.5 106.5 L174.0 105.2 L175.5 104.0 L177.1 102.8 L178.7 101.7 L180.4 100.7 L182.2 99.8 L184.0 99.0 L185.8 98.3 L187.7 97.7 L189.6 97.3 L191.5 96.9 L193.4 96.7 L195.3 96.6 L197.3 96.9 L199.3 97.2 L201.2 97.7 L203.4 101.2 L204.8 108.2 L207.0 110.4 L208.7 106.5 L213.5 108.7 L218.0 110.8 L219.2 112.4 L220.5 114.0 L221.7 115.5 L223.0 117.1 L224.3 118.6 L225.6 120.1 L227.0 121.5 L228.5 122.9 L229.9 124.2 L231.4 125.6 L232.9 126.9 L234.5 128.2 L236.0 129.4 L237.6 130.7 L239.1 132.0 L240.6 133.3 L242.0 134.7 L243.4 136.1 L244.9 137.4 L246.5 138.6 L248.1 139.8 L249.6 141.0 L251.1 142.4 L252.4 143.8 L253.8 145.3 L255.0 146.9 L256.3 148.5 L257.5 150.0 L258.8 151.6 L260.1 153.1 L261.5 154.5 L262.9 155.9 L264.4 157.2 L266.0 158.4 L267.7 159.5 L269.4 160.5 L271.1 161.5 L272.9 162.4 L274.7 163.3 L276.3 164.4 L277.9 165.6 L279.3 166.9 L280.8 168.3 L282.2 169.7 L283.7 171.0 L285.2 172.4 L286.7 173.7 L288.2 175.0 L289.8 176.3 L291.3 177.6 L292.8 178.9 L294.2 180.3 L295.7 181.7 L297.2 183.0 L298.6 184.4 L300.1 185.8 L301.5 187.2 L302.9 188.6 L304.3 190.0 L305.8 191.4 L307.2 192.8 L308.7 194.2 L310.1 195.5 L311.6 196.8 L313.1 198.2 L314.6 199.5 L316.1 200.8 L317.7 202.1 L319.2 203.4 L320.8 204.5 L322.5 205.7 L324.1 206.8 L325.7 208.0 L327.2 209.3 L328.8 210.6 L330.2 211.9 L331.7 213.3 L333.1 214.7 L334.4 216.2 L335.7 217.8 L336.9 219.3 L338.2 220.9 L339.4 222.5 L340.7 224.0 L342.0 225.5 L343.3 227.0 L344.7 228.5 L346.1 229.9 L347.5 231.3 L349.0 232.7 L350.4 234.1 L351.9 235.5 L353.3 236.8 L354.8 238.2 L356.3 239.5 L357.8 240.8 L359.3 242.2 L360.8 243.5 L362.3 244.8 L363.8 246.1 L365.3 247.5 L366.8 248.8 L368.3 250.1 L369.8 251.5 L371.3 252.8 L372.8 254.1 L374.3 255.4 L375.8 256.7 L377.4 257.9 L379.0 259.2 L380.6 260.4 L382.1 261.7 L383.6 263.0 L385.0 264.4 L386.4 265.8 L387.8 267.2 L389.3 268.7 L390.7 270.1 L392.1 271.5 L393.5 272.9 L394.9 274.3 L396.4 275.7 L397.8 277.1 L399.3 278.5 L400.7 279.8 L402.2 281.2 L403.7 282.6 L405.1 283.9 L406.6 285.3 L408.0 286.7 L409.5 288.0 L411.0 289.4 L412.4 290.8 L413.9 292.1 L415.4 293.5 L416.9 294.8 L418.4 296.1 L420.0 297.4 L421.5 298.6 L423.1 299.9 L424.6 301.1 L426.1 302.5 L427.5 303.9 L428.8 305.4 L430.3 306.8 L431.8 308.1 L433.3 309.3 L434.8 310.6 L436.3 311.9 L437.7 313.3 L438.9 314.8 L440.2 316.4 L441.5 317.8 L442.9 319.2 L444.5 320.5 L446.1 321.7 L447.6 322.9 L449.2 324.1 L450.7 325.2 L452.4 326.2 L454.1 327.0 L455.8 327.8 L457.5 328.8 L459.1 329.9 L460.7 331.2 L462.2 332.4 L463.8 333.7 L465.3 335.0 L466.8 336.3 L468.3 337.6 L469.8 338.9 L471.4 340.2 L472.9 341.5 L474.4 342.8 L476.0 344.1 L477.5 345.4 L479.0 346.7 L480.5 348.1 L481.9 349.5 L483.3 350.9 L484.7 352.3 L486.1 353.7 L487.6 355.1 L489.1 356.4 L490.6 357.6 L492.2 358.8 L493.8 360.0 L495.4 361.2 L496.9 362.5 L498.4 363.8 L500.0 365.2 L501.5 366.4 L503.1 367.6 L504.7 368.8 L506.4 369.9 L508.0 371.1 L509.5 372.4 L511.1 373.6 L512.6 374.9 L514.2 376.1 L515.8 377.4 L517.3 378.6 L518.8 380.0 L520.2 381.4 L521.5 382.7 L523.0 384.0 L524.6 385.2 L526.2 386.3 L527.8 387.5 L529.3 388.8 L530.8 390.2 L532.2 391.5 L533.7 392.8 L535.3 394.0 L537.0 395.1 L538.7 396.2 L540.3 397.3 L542.0 398.4 L543.7 399.5 L545.4 400.5 L547.2 401.5 L548.9 402.5 L550.6 403.5 L552.3 404.6 L553.9 405.8 L555.4 407.0 L556.9 408.4 L558.4 409.7 L559.9 411.0 L561.5 412.2 L563.1 413.4 L564.7 414.5 L566.4 415.6 L568.1 416.7 L569.8 417.6 L571.6 418.5 L573.3 419.4 L575.0 420.5 L576.5 421.8 L578.0 423.1 L579.4 424.5 L580.8 426.0 L582.2 427.4 L583.5 428.9 L584.8 430.4 L586.2 431.9 L587.5 433.4 L588.8 434.9 L590.2 436.3 L591.6 437.7 L593.1 439.1 L594.6 440.4 L596.2 441.7 L597.7 442.9 L599.3 444.2 L600.8 445.4 L602.5 446.5 L604.2 447.5 L606.0 448.4 L607.8 449.3 L609.5 450.3 L611.2 451.3 L612.9 452.4 L614.6 453.5 L616.2 454.7 L617.8 455.9 L619.4 457.1 L621.0 458.3 L622.6 459.5 L624.2 460.6 L625.9 461.8 L627.5 462.9 L629.0 464.2 L630.5 465.5 L632.0 466.9 L633.4 468.3 L634.9 469.6 L636.4 471.0 L637.9 472.3 L639.4 473.6 L641.0 474.9 L642.5 476.1 L644.0 477.4 L645.6 478.7 L647.1 480.0 L648.7 481.2 L650.3 482.4 L651.9 483.6 L653.5 484.8 L655.1 486.0 L656.7 487.2 L658.3 488.4 L659.9 489.6 L661.5 490.9 L663.0 492.1 L664.5 493.5 L666.0 494.8 L667.4 496.2 L668.8 497.6 L670.3 499.0 L671.7 500.4 L673.1 501.8 L674.5 503.3 L675.9 504.7 L677.3 506.1 L678.7 507.5 L680.2 508.9 L681.6 510.3 L683.1 511.7 L684.6 512.9 L686.2 514.1 L687.9 515.2 L689.6 516.3 L691.3 517.3 L692.9 518.4 L694.6 519.6 L696.2 520.7 L697.8 521.9 L699.3 523.2 L700.8 524.6 L702.2 526.0 L703.7 527.4 L705.1 528.7 L706.6 530.1 L708.1 531.4 L709.6 532.8 L711.0 534.1 L712.5 535.5 L714.0 536.8 L715.6 537.9 L717.3 538.9 L719.0 539.8 L720.8 540.8 L722.5 541.8 L724.1 542.9 L725.9 543.8 L727.6 544.7 L729.4 545.7 L731.1 546.7 L732.6 547.9 L734.1 549.2 L735.6 550.5 L737.1 551.8 L738.6 553.1 L740.2 554.4 L741.7 555.7 L743.2 557.1 L744.6 558.4 L746.1 559.8 L747.5 561.2 L749.1 562.5 L750.6 563.7 L752.3 564.8 L754.0 565.8 L755.8 566.6 L757.6 567.3 L759.5 567.9 L761.5 568.3 L763.5 568.6 L765.4 568.9 L767.4 569.2 L769.4 569.6 L771.3 570.1 L773.2 570.6 L775.2 571.1 L777.1 571.7 L779.0 572.3 L780.9 572.9 L782.8 573.5 L784.7 574.0 L786.7 574.5 L788.6 575.0 L790.5 575.5 L792.5 576.1 L794.4 576.6 L796.3 577.2 L798.2 577.8 L800.1 578.5 L801.9 579.2 L803.8 580.0 L805.6 580.8 L807.5 581.5 L809.4 582.0 L811.3 582.5 L813.3 582.8 L815.2 583.2 L817.2 583.6 L819.2 583.9 L821.1 584.3 L823.1 584.7 L825.1 585.1 L827.0 585.5 L829.0 586.0 L830.9 586.5 L832.9 586.9 L834.8 587.4 L836.8 587.9 L838.7 588.3 L840.7 588.7 L842.6 589.2 L844.6 589.6 L846.5 590.0 L848.5 590.4 L850.4 590.9 L852.4 591.5 L854.3 592.0 L856.2 592.6 L858.1 593.2 L860.0 593.7 L862.0 594.3 L863.9 594.9 L865.8 595.4 L867.7 596.0 L869.6 596.5 L871.6 597.1 L873.5 597.6 L875.4 598.2 L877.4 598.7 L879.3 599.1 L881.3 599.6 L883.2 600.1 L885.2 600.5 L887.1 600.9 L889.1 601.4 L891.0 601.8 L893.0 602.2 L894.9 602.6 L896.9 603.0 L898.8 603.5 L900.8 604.0 L902.7 604.5 L904.7 605.0 L906.6 605.5 L964.0 605.5" fill="none" stroke="#c828d8" stroke-width="1" stroke-linejoin="round"/><line x1="186.5" y1="93" x2="186.5" y2="109" stroke="#e00000" stroke-width="1"/><line x1="735.5" y1="543" x2="735.5" y2="559" stroke="#e00000" stroke-width="1"/><g stroke="#000" stroke-width="1" shape-rendering="crispEdges"><line x1="59.5" y1="58" x2="59.5" y2="608"/><line x1="59" y1="58.5" x2="965" y2="58.5"/><line x1="964.5" y1="58" x2="964.5" y2="608"/><line x1="55" y1="607.5" x2="969" y2="607.5"/><line x1="55" y1="607.5" x2="59" y2="607.5"/><line x1="55" y1="552.5" x2="59" y2="552.5"/><line x1="55" y1="497.5" x2="59" y2="497.5"/><line x1="55" y1="442.5" x2="59" y2="442.5"/><line x1="55" y1="387.5" x2="59" y2="387.5"/><line x1="55" y1="333.5" x2="59" y2="333.5"/><line x1="55" y1="278.5" x2="59" y2="278.5"/><line x1="55" y1="223.5" x2="59" y2="223.5"/><line x1="55" y1="168.5" x2="59" y2="168.5"/><line x1="55" y1="113.5" x2="59" y2="113.5"/><line x1="55" y1="59.5" x2="59" y2="59.5"/><line x1="965" y1="607.5" x2="969" y2="607.5"/><line x1="963" y1="594.5" x2="966" y2="594.5"/><line x1="963" y1="582.5" x2="966" y2="582.5"/><line x1="963" y1="570.5" x2="966" y2="570.5"/><line x1="963" y1="558.5" x2="966" y2="558.5"/><line x1="965" y1="546.5" x2="969" y2="546.5"/><line x1="963" y1="533.5" x2="966" y2="533.5"/><line x1="963" y1="521.5" x2="966" y2="521.5"/><line x1="963" y1="509.5" x2="966" y2="509.5"/><line x1="963" y1="497.5" x2="966" y2="497.5"/><line x1="965" y1="485.5" x2="969" y2="485.5"/><line x1="963" y1="473.5" x2="966" y2="473.5"/><line x1="963" y1="460.5" x2="966" y2="460.5"/><line x1="963" y1="448.5" x2="966" y2="448.5"/><line x1="963" y1="436.5" x2="966" y2="436.5"/><line x1="965" y1="424.5" x2="969" y2="424.5"/><line x1="963" y1="412.5" x2="966" y2="412.5"/><line x1="963" y1="399.5" x2="966" y2="399.5"/><line x1="963" y1="387.5" x2="966" y2="387.5"/><line x1="963" y1="375.5" x2="966" y2="375.5"/><line x1="965" y1="363.5" x2="969" y2="363.5"/><line x1="963" y1="351.5" x2="966" y2="351.5"/><line x1="963" y1="339.5" x2="966" y2="339.5"/><line x1="963" y1="326.5" x2="966" y2="326.5"/><line x1="963" y1="314.5" x2="966" y2="314.5"/><line x1="965" y1="302.5" x2="969" y2="302.5"/><line x1="963" y1="290.5" x2="966" y2="290.5"/><line x1="963" y1="278.5" x2="966" y2="278.5"/><line x1="963" y1="266.5" x2="966" y2="266.5"/><line x1="963" y1="253.5" x2="966" y2="253.5"/><line x1="965" y1="241.5" x2="969" y2="241.5"/><line x1="963" y1="229.5" x2="966" y2="229.5"/><line x1="963" y1="217.5" x2="966" y2="217.5"/><line x1="963" y1="205.5" x2="966" y2="205.5"/><line x1="963" y1="192.5" x2="966" y2="192.5"/><line x1="965" y1="180.5" x2="969" y2="180.5"/><line x1="963" y1="168.5" x2="966" y2="168.5"/><line x1="963" y1="156.5" x2="966" y2="156.5"/><line x1="963" y1="144.5" x2="966" y2="144.5"/><line x1="963" y1="132.5" x2="966" y2="132.5"/><line x1="965" y1="119.5" x2="969" y2="119.5"/><line x1="963" y1="107.5" x2="966" y2="107.5"/><line x1="963" y1="95.5" x2="966" y2="95.5"/><line x1="963" y1="83.5" x2="966" y2="83.5"/><line x1="963" y1="71.5" x2="966" y2="71.5"/><line x1="965" y1="59.5" x2="969" y2="59.5"/><line x1="60.5" y1="608" x2="60.5" y2="613"/><line x1="82.5" y1="608" x2="82.5" y2="610"/><line x1="104.5" y1="608" x2="104.5" y2="610"/><line x1="126.5" y1="608" x2="126.5" y2="610"/><line x1="149.5" y1="608" x2="149.5" y2="610"/><line x1="171.5" y1="608" x2="171.5" y2="613"/><line x1="193.5" y1="608" x2="193.5" y2="610"/><line x1="216.5" y1="608" x2="216.5" y2="610"/><line x1="238.5" y1="608" x2="238.5" y2="610"/><line x1="260.5" y1="608" x2="260.5" y2="610"/><line x1="283.5" y1="608" x2="283.5" y2="613"/><line x1="305.5" y1="608" x2="305.5" y2="610"/><line x1="327.5" y1="608" x2="327.5" y2="610"/><line x1="349.5" y1="608" x2="349.5" y2="610"/><line x1="372.5" y1="608" x2="372.5" y2="610"/><line x1="394.5" y1="608" x2="394.5" y2="613"/><line x1="416.5" y1="608" x2="416.5" y2="610"/><line x1="439.5" y1="608" x2="439.5" y2="610"/><line x1="461.5" y1="608" x2="461.5" y2="610"/><line x1="483.5" y1="608" x2="483.5" y2="610"/><line x1="506.5" y1="608" x2="506.5" y2="613"/><line x1="528.5" y1="608" x2="528.5" y2="610"/><line x1="550.5" y1="608" x2="550.5" y2="610"/><line x1="572.5" y1="608" x2="572.5" y2="610"/><line x1="595.5" y1="608" x2="595.5" y2="610"/><line x1="617.5" y1="608" x2="617.5" y2="613"/><line x1="639.5" y1="608" x2="639.5" y2="610"/><line x1="662.5" y1="608" x2="662.5" y2="610"/><line x1="684.5" y1="608" x2="684.5" y2="610"/><line x1="706.5" y1="608" x2="706.5" y2="610"/><line x1="729.5" y1="608" x2="729.5" y2="613"/><line x1="751.5" y1="608" x2="751.5" y2="610"/><line x1="773.5" y1="608" x2="773.5" y2="610"/><line x1="795.5" y1="608" x2="795.5" y2="610"/><line x1="818.5" y1="608" x2="818.5" y2="610"/><line x1="840.5" y1="608" x2="840.5" y2="613"/><line x1="862.5" y1="608" x2="862.5" y2="610"/><line x1="885.5" y1="608" x2="885.5" y2="610"/><line x1="907.5" y1="608" x2="907.5" y2="610"/><line x1="929.5" y1="608" x2="929.5" y2="610"/><line x1="952.5" y1="608" x2="952.5" y2="613"/></g><path d="M49 604h2v1h-2zM48 605h1v1h-1zM51 605h1v1h-1zM48 606h1v1h-1zM51 606h1v1h-1zM48 607h1v1h-1zM51 607h1v1h-1zM48 608h1v1h-1zM51 608h1v1h-1zM48 609h1v1h-1zM51 609h1v1h-1zM49 610h2v1h-2zM38 549h4v1h-4zM38 550h1v1h-1zM38 551h3v1h-3zM41 552h1v1h-1zM41 553h1v1h-1zM38 554h1v1h-1zM41 554h1v1h-1zM39 555h2v1h-2zM44 549h2v1h-2zM43 550h1v1h-1zM46 550h1v1h-1zM43 551h1v1h-1zM46 551h1v1h-1zM43 552h1v1h-1zM46 552h1v1h-1zM43 553h1v1h-1zM46 553h1v1h-1zM43 554h1v1h-1zM46 554h1v1h-1zM44 555h2v1h-2zM49 549h2v1h-2zM48 550h1v1h-1zM51 550h1v1h-1zM48 551h1v1h-1zM51 551h1v1h-1zM48 552h1v1h-1zM51 552h1v1h-1zM48 553h1v1h-1zM51 553h1v1h-1zM48 554h1v1h-1zM51 554h1v1h-1zM49 555h2v1h-2zM32 494h1v1h-1zM31 495h2v1h-2zM32 496h1v1h-1zM32 497h1v1h-1zM32 498h1v1h-1zM32 499h1v1h-1zM32 500h1v1h-1zM36 499h1v1h-1zM36 500h1v1h-1zM35 501h1v1h-1zM39 494h2v1h-2zM38 495h1v1h-1zM41 495h1v1h-1zM38 496h1v1h-1zM41 496h1v1h-1zM38 497h1v1h-1zM41 497h1v1h-1zM38 498h1v1h-1zM41 498h1v1h-1zM38 499h1v1h-1zM41 499h1v1h-1zM39 500h2v1h-2zM44 494h2v1h-2zM43 495h1v1h-1zM46 495h1v1h-1zM43 496h1v1h-1zM46 496h1v1h-1zM43 497h1v1h-1zM46 497h1v1h-1zM43 498h1v1h-1zM46 498h1v1h-1zM43 499h1v1h-1zM46 499h1v1h-1zM44 500h2v1h-2zM49 494h2v1h-2zM48 495h1v1h-1zM51 495h1v1h-1zM48 496h1v1h-1zM51 496h1v1h-1zM48 497h1v1h-1zM51 497h1v1h-1zM48 498h1v1h-1zM51 498h1v1h-1zM48 499h1v1h-1zM51 499h1v1h-1zM49 500h2v1h-2zM32 439h1v1h-1zM31 440h2v1h-2zM32 441h1v1h-1zM32 442h1v1h-1zM32 443h1v1h-1zM32 444h1v1h-1zM32 445h1v1h-1zM36 444h1v1h-1zM36 445h1v1h-1zM35 446h1v1h-1zM38 439h4v1h-4zM38 440h1v1h-1zM38 441h3v1h-3zM41 442h1v1h-1zM41 443h1v1h-1zM38 444h1v1h-1zM41 444h1v1h-1zM39 445h2v1h-2zM44 439h2v1h-2zM43 440h1v1h-1zM46 440h1v1h-1zM43 441h1v1h-1zM46 441h1v1h-1zM43 442h1v1h-1zM46 442h1v1h-1zM43 443h1v1h-1zM46 443h1v1h-1zM43 444h1v1h-1zM46 444h1v1h-1zM44 445h2v1h-2zM49 439h2v1h-2zM48 440h1v1h-1zM51 440h1v1h-1zM48 441h1v1h-1zM51 441h1v1h-1zM48 442h1v1h-1zM51 442h1v1h-1zM48 443h1v1h-1zM51 443h1v1h-1zM48 444h1v1h-1zM51 444h1v1h-1zM49 445h2v1h-2zM31 384h2v1h-2zM30 385h1v1h-1zM33 385h1v1h-1zM33 386h1v1h-1zM32 387h1v1h-1zM31 388h1v1h-1zM30 389h1v1h-1zM30 390h4v1h-4zM36 389h1v1h-1zM36 390h1v1h-1zM35 391h1v1h-1zM39 384h2v1h-2zM38 385h1v1h-1zM41 385h1v1h-1zM38 386h1v1h-1zM41 386h1v1h-1zM38 387h1v1h-1zM41 387h1v1h-1zM38 388h1v1h-1zM41 388h1v1h-1zM38 389h1v1h-1zM41 389h1v1h-1zM39 390h2v1h-2zM44 384h2v1h-2zM43 385h1v1h-1zM46 385h1v1h-1zM43 386h1v1h-1zM46 386h1v1h-1zM43 387h1v1h-1zM46 387h1v1h-1zM43 388h1v1h-1zM46 388h1v1h-1zM43 389h1v1h-1zM46 389h1v1h-1zM44 390h2v1h-2zM49 384h2v1h-2zM48 385h1v1h-1zM51 385h1v1h-1zM48 386h1v1h-1zM51 386h1v1h-1zM48 387h1v1h-1zM51 387h1v1h-1zM48 388h1v1h-1zM51 388h1v1h-1zM48 389h1v1h-1zM51 389h1v1h-1zM49 390h2v1h-2zM31 330h2v1h-2zM30 331h1v1h-1zM33 331h1v1h-1zM33 332h1v1h-1zM32 333h1v1h-1zM31 334h1v1h-1zM30 335h1v1h-1zM30 336h4v1h-4zM36 335h1v1h-1zM36 336h1v1h-1zM35 337h1v1h-1zM38 330h4v1h-4zM38 331h1v1h-1zM38 332h3v1h-3zM41 333h1v1h-1zM41 334h1v1h-1zM38 335h1v1h-1zM41 335h1v1h-1zM39 336h2v1h-2zM44 330h2v1h-2zM43 331h1v1h-1zM46 331h1v1h-1zM43 332h1v1h-1zM46 332h1v1h-1zM43 333h1v1h-1zM46 333h1v1h-1zM43 334h1v1h-1zM46 334h1v1h-1zM43 335h1v1h-1zM46 335h1v1h-1zM44 336h2v1h-2zM49 330h2v1h-2zM48 331h1v1h-1zM51 331h1v1h-1zM48 332h1v1h-1zM51 332h1v1h-1zM48 333h1v1h-1zM51 333h1v1h-1zM48 334h1v1h-1zM51 334h1v1h-1zM48 335h1v1h-1zM51 335h1v1h-1zM49 336h2v1h-2zM31 275h2v1h-2zM30 276h1v1h-1zM33 276h1v1h-1zM33 277h1v1h-1zM31 278h2v1h-2zM33 279h1v1h-1zM30 280h1v1h-1zM33 280h1v1h-1zM31 281h2v1h-2zM36 280h1v1h-1zM36 281h1v1h-1zM35 282h1v1h-1zM39 275h2v1h-2zM38 276h1v1h-1zM41 276h1v1h-1zM38 277h1v1h-1zM41 277h1v1h-1zM38 278h1v1h-1zM41 278h1v1h-1zM38 279h1v1h-1zM41 279h1v1h-1zM38 280h1v1h-1zM41 280h1v1h-1zM39 281h2v1h-2zM44 275h2v1h-2zM43 276h1v1h-1zM46 276h1v1h-1zM43 277h1v1h-1zM46 277h1v1h-1zM43 278h1v1h-1zM46 278h1v1h-1zM43 279h1v1h-1zM46 279h1v1h-1zM43 280h1v1h-1zM46 280h1v1h-1zM44 281h2v1h-2zM49 275h2v1h-2zM48 276h1v1h-1zM51 276h1v1h-1zM48 277h1v1h-1zM51 277h1v1h-1zM48 278h1v1h-1zM51 278h1v1h-1zM48 279h1v1h-1zM51 279h1v1h-1zM48 280h1v1h-1zM51 280h1v1h-1zM49 281h2v1h-2zM31 220h2v1h-2zM30 221h1v1h-1zM33 221h1v1h-1zM33 222h1v1h-1zM31 223h2v1h-2zM33 224h1v1h-1zM30 225h1v1h-1zM33 225h1v1h-1zM31 226h2v1h-2zM36 225h1v1h-1zM36 226h1v1h-1zM35 227h1v1h-1zM38 220h4v1h-4zM38 221h1v1h-1zM38 222h3v1h-3zM41 223h1v1h-1zM41 224h1v1h-1zM38 225h1v1h-1zM41 225h1v1h-1zM39 226h2v1h-2zM44 220h2v1h-2zM43 221h1v1h-1zM46 221h1v1h-1zM43 222h1v1h-1zM46 222h1v1h-1zM43 223h1v1h-1zM46 223h1v1h-1zM43 224h1v1h-1zM46 224h1v1h-1zM43 225h1v1h-1zM46 225h1v1h-1zM44 226h2v1h-2zM49 220h2v1h-2zM48 221h1v1h-1zM51 221h1v1h-1zM48 222h1v1h-1zM51 222h1v1h-1zM48 223h1v1h-1zM51 223h1v1h-1zM48 224h1v1h-1zM51 224h1v1h-1zM48 225h1v1h-1zM51 225h1v1h-1zM49 226h2v1h-2zM33 165h1v1h-1zM32 166h2v1h-2zM31 167h1v1h-1zM33 167h1v1h-1zM30 168h1v1h-1zM33 168h1v1h-1zM30 169h5v1h-5zM33 170h1v1h-1zM33 171h1v1h-1zM36 170h1v1h-1zM36 171h1v1h-1zM35 172h1v1h-1zM39 165h2v1h-2zM38 166h1v1h-1zM41 166h1v1h-1zM38 167h1v1h-1zM41 167h1v1h-1zM38 168h1v1h-1zM41 168h1v1h-1zM38 169h1v1h-1zM41 169h1v1h-1zM38 170h1v1h-1zM41 170h1v1h-1zM39 171h2v1h-2zM44 165h2v1h-2zM43 166h1v1h-1zM46 166h1v1h-1zM43 167h1v1h-1zM46 167h1v1h-1zM43 168h1v1h-1zM46 168h1v1h-1zM43 169h1v1h-1zM46 169h1v1h-1zM43 170h1v1h-1zM46 170h1v1h-1zM44 171h2v1h-2zM49 165h2v1h-2zM48 166h1v1h-1zM51 166h1v1h-1zM48 167h1v1h-1zM51 167h1v1h-1zM48 168h1v1h-1zM51 168h1v1h-1zM48 169h1v1h-1zM51 169h1v1h-1zM48 170h1v1h-1zM51 170h1v1h-1zM49 171h2v1h-2zM33 110h1v1h-1zM32 111h2v1h-2zM31 112h1v1h-1zM33 112h1v1h-1zM30 113h1v1h-1zM33 113h1v1h-1zM30 114h5v1h-5zM33 115h1v1h-1zM33 116h1v1h-1zM36 115h1v1h-1zM36 116h1v1h-1zM35 117h1v1h-1zM38 110h4v1h-4zM38 111h1v1h-1zM38 112h3v1h-3zM41 113h1v1h-1zM41 114h1v1h-1zM38 115h1v1h-1zM41 115h1v1h-1zM39 116h2v1h-2zM44 110h2v1h-2zM43 111h1v1h-1zM46 111h1v1h-1zM43 112h1v1h-1zM46 112h1v1h-1zM43 113h1v1h-1zM46 113h1v1h-1zM43 114h1v1h-1zM46 114h1v1h-1zM43 115h1v1h-1zM46 115h1v1h-1zM44 116h2v1h-2zM49 110h2v1h-2zM48 111h1v1h-1zM51 111h1v1h-1zM48 112h1v1h-1zM51 112h1v1h-1zM48 113h1v1h-1zM51 113h1v1h-1zM48 114h1v1h-1zM51 114h1v1h-1zM48 115h1v1h-1zM51 115h1v1h-1zM49 116h2v1h-2zM30 56h4v1h-4zM30 57h1v1h-1zM30 58h3v1h-3zM33 59h1v1h-1zM33 60h1v1h-1zM30 61h1v1h-1zM33 61h1v1h-1zM31 62h2v1h-2zM36 61h1v1h-1zM36 62h1v1h-1zM35 63h1v1h-1zM39 56h2v1h-2zM38 57h1v1h-1zM41 57h1v1h-1zM38 58h1v1h-1zM41 58h1v1h-1zM38 59h1v1h-1zM41 59h1v1h-1zM38 60h1v1h-1zM41 60h1v1h-1zM38 61h1v1h-1zM41 61h1v1h-1zM39 62h2v1h-2zM44 56h2v1h-2zM43 57h1v1h-1zM46 57h1v1h-1zM43 58h1v1h-1zM46 58h1v1h-1zM43 59h1v1h-1zM46 59h1v1h-1zM43 60h1v1h-1zM46 60h1v1h-1zM43 61h1v1h-1zM46 61h1v1h-1zM44 62h2v1h-2zM49 56h2v1h-2zM48 57h1v1h-1zM51 57h1v1h-1zM48 58h1v1h-1zM51 58h1v1h-1zM48 59h1v1h-1zM51 59h1v1h-1zM48 60h1v1h-1zM51 60h1v1h-1zM48 61h1v1h-1zM51 61h1v1h-1zM49 62h2v1h-2z" fill="#dc28e0" shape-rendering="crispEdges"/><path d="M973 606h2v1h-2zM979 603h1v1h-1zM978 604h2v1h-2zM977 605h1v1h-1zM979 605h1v1h-1zM976 606h1v1h-1zM979 606h1v1h-1zM976 607h5v1h-5zM979 608h1v1h-1zM979 609h1v1h-1zM982 603h2v1h-2zM981 604h1v1h-1zM984 604h1v1h-1zM981 605h1v1h-1zM984 605h1v1h-1zM981 606h1v1h-1zM984 606h1v1h-1zM981 607h1v1h-1zM984 607h1v1h-1zM981 608h1v1h-1zM984 608h1v1h-1zM982 609h2v1h-2zM987 603h2v1h-2zM986 604h1v1h-1zM989 604h1v1h-1zM986 605h1v1h-1zM989 605h1v1h-1zM986 606h1v1h-1zM989 606h1v1h-1zM986 607h1v1h-1zM989 607h1v1h-1zM986 608h1v1h-1zM989 608h1v1h-1zM987 609h2v1h-2zM973 545h2v1h-2zM977 542h2v1h-2zM976 543h1v1h-1zM979 543h1v1h-1zM979 544h1v1h-1zM978 545h1v1h-1zM977 546h1v1h-1zM976 547h1v1h-1zM976 548h4v1h-4zM982 542h2v1h-2zM981 543h1v1h-1zM984 543h1v1h-1zM981 544h1v1h-1zM984 544h1v1h-1zM981 545h1v1h-1zM984 545h1v1h-1zM981 546h1v1h-1zM984 546h1v1h-1zM981 547h1v1h-1zM984 547h1v1h-1zM982 548h2v1h-2zM987 542h2v1h-2zM986 543h1v1h-1zM989 543h1v1h-1zM986 544h1v1h-1zM989 544h1v1h-1zM986 545h1v1h-1zM989 545h1v1h-1zM986 546h1v1h-1zM989 546h1v1h-1zM986 547h1v1h-1zM989 547h1v1h-1zM987 548h2v1h-2zM974 481h2v1h-2zM973 482h1v1h-1zM976 482h1v1h-1zM973 483h1v1h-1zM976 483h1v1h-1zM973 484h1v1h-1zM976 484h1v1h-1zM973 485h1v1h-1zM976 485h1v1h-1zM973 486h1v1h-1zM976 486h1v1h-1zM974 487h2v1h-2zM974 420h2v1h-2zM973 421h1v1h-1zM976 421h1v1h-1zM976 422h1v1h-1zM975 423h1v1h-1zM974 424h1v1h-1zM973 425h1v1h-1zM973 426h4v1h-4zM979 420h2v1h-2zM978 421h1v1h-1zM981 421h1v1h-1zM978 422h1v1h-1zM981 422h1v1h-1zM978 423h1v1h-1zM981 423h1v1h-1zM978 424h1v1h-1zM981 424h1v1h-1zM978 425h1v1h-1zM981 425h1v1h-1zM979 426h2v1h-2zM984 420h2v1h-2zM983 421h1v1h-1zM986 421h1v1h-1zM983 422h1v1h-1zM986 422h1v1h-1zM983 423h1v1h-1zM986 423h1v1h-1zM983 424h1v1h-1zM986 424h1v1h-1zM983 425h1v1h-1zM986 425h1v1h-1zM984 426h2v1h-2zM976 359h1v1h-1zM975 360h2v1h-2zM974 361h1v1h-1zM976 361h1v1h-1zM973 362h1v1h-1zM976 362h1v1h-1zM973 363h5v1h-5zM976 364h1v1h-1zM976 365h1v1h-1zM979 359h2v1h-2zM978 360h1v1h-1zM981 360h1v1h-1zM978 361h1v1h-1zM981 361h1v1h-1zM978 362h1v1h-1zM981 362h1v1h-1zM978 363h1v1h-1zM981 363h1v1h-1zM978 364h1v1h-1zM981 364h1v1h-1zM979 365h2v1h-2zM984 359h2v1h-2zM983 360h1v1h-1zM986 360h1v1h-1zM983 361h1v1h-1zM986 361h1v1h-1zM983 362h1v1h-1zM986 362h1v1h-1zM983 363h1v1h-1zM986 363h1v1h-1zM983 364h1v1h-1zM986 364h1v1h-1zM984 365h2v1h-2zM974 298h2v1h-2zM973 299h1v1h-1zM973 300h3v1h-3zM973 301h1v1h-1zM976 301h1v1h-1zM973 302h1v1h-1zM976 302h1v1h-1zM973 303h1v1h-1zM976 303h1v1h-1zM974 304h2v1h-2zM979 298h2v1h-2zM978 299h1v1h-1zM981 299h1v1h-1zM978 300h1v1h-1zM981 300h1v1h-1zM978 301h1v1h-1zM981 301h1v1h-1zM978 302h1v1h-1zM981 302h1v1h-1zM978 303h1v1h-1zM981 303h1v1h-1zM979 304h2v1h-2zM984 298h2v1h-2zM983 299h1v1h-1zM986 299h1v1h-1zM983 300h1v1h-1zM986 300h1v1h-1zM983 301h1v1h-1zM986 301h1v1h-1zM983 302h1v1h-1zM986 302h1v1h-1zM983 303h1v1h-1zM986 303h1v1h-1zM984 304h2v1h-2zM974 237h2v1h-2zM973 238h1v1h-1zM976 238h1v1h-1zM973 239h1v1h-1zM976 239h1v1h-1zM974 240h2v1h-2zM973 241h1v1h-1zM976 241h1v1h-1zM973 242h1v1h-1zM976 242h1v1h-1zM974 243h2v1h-2zM979 237h2v1h-2zM978 238h1v1h-1zM981 238h1v1h-1zM978 239h1v1h-1zM981 239h1v1h-1zM978 240h1v1h-1zM981 240h1v1h-1zM978 241h1v1h-1zM981 241h1v1h-1zM978 242h1v1h-1zM981 242h1v1h-1zM979 243h2v1h-2zM984 237h2v1h-2zM983 238h1v1h-1zM986 238h1v1h-1zM983 239h1v1h-1zM986 239h1v1h-1zM983 240h1v1h-1zM986 240h1v1h-1zM983 241h1v1h-1zM986 241h1v1h-1zM983 242h1v1h-1zM986 242h1v1h-1zM984 243h2v1h-2zM975 176h1v1h-1zM974 177h2v1h-2zM975 178h1v1h-1zM975 179h1v1h-1zM975 180h1v1h-1zM975 181h1v1h-1zM975 182h1v1h-1zM979 181h1v1h-1zM979 182h1v1h-1zM978 183h1v1h-1zM982 176h2v1h-2zM981 177h1v1h-1zM984 177h1v1h-1zM981 178h1v1h-1zM984 178h1v1h-1zM981 179h1v1h-1zM984 179h1v1h-1zM981 180h1v1h-1zM984 180h1v1h-1zM981 181h1v1h-1zM984 181h1v1h-1zM982 182h2v1h-2zM987 176h2v1h-2zM986 177h1v1h-1zM989 177h1v1h-1zM986 178h1v1h-1zM989 178h1v1h-1zM986 179h1v1h-1zM989 179h1v1h-1zM986 180h1v1h-1zM989 180h1v1h-1zM986 181h1v1h-1zM989 181h1v1h-1zM987 182h2v1h-2zM992 176h2v1h-2zM991 177h1v1h-1zM994 177h1v1h-1zM991 178h1v1h-1zM994 178h1v1h-1zM991 179h1v1h-1zM994 179h1v1h-1zM991 180h1v1h-1zM994 180h1v1h-1zM991 181h1v1h-1zM994 181h1v1h-1zM992 182h2v1h-2zM975 115h1v1h-1zM974 116h2v1h-2zM975 117h1v1h-1zM975 118h1v1h-1zM975 119h1v1h-1zM975 120h1v1h-1zM975 121h1v1h-1zM979 120h1v1h-1zM979 121h1v1h-1zM978 122h1v1h-1zM982 115h2v1h-2zM981 116h1v1h-1zM984 116h1v1h-1zM984 117h1v1h-1zM983 118h1v1h-1zM982 119h1v1h-1zM981 120h1v1h-1zM981 121h4v1h-4zM987 115h2v1h-2zM986 116h1v1h-1zM989 116h1v1h-1zM986 117h1v1h-1zM989 117h1v1h-1zM986 118h1v1h-1zM989 118h1v1h-1zM986 119h1v1h-1zM989 119h1v1h-1zM986 120h1v1h-1zM989 120h1v1h-1zM987 121h2v1h-2zM992 115h2v1h-2zM991 116h1v1h-1zM994 116h1v1h-1zM991 117h1v1h-1zM994 117h1v1h-1zM991 118h1v1h-1zM994 118h1v1h-1zM991 119h1v1h-1zM994 119h1v1h-1zM991 120h1v1h-1zM994 120h1v1h-1zM992 121h2v1h-2zM975 55h1v1h-1zM974 56h2v1h-2zM975 57h1v1h-1zM975 58h1v1h-1zM975 59h1v1h-1zM975 60h1v1h-1zM975 61h1v1h-1zM979 60h1v1h-1zM979 61h1v1h-1zM978 62h1v1h-1zM984 55h1v1h-1zM983 56h2v1h-2zM982 57h1v1h-1zM984 57h1v1h-1zM981 58h1v1h-1zM984 58h1v1h-1zM981 59h5v1h-5zM984 60h1v1h-1zM984 61h1v1h-1zM987 55h2v1h-2zM986 56h1v1h-1zM989 56h1v1h-1zM986 57h1v1h-1zM989 57h1v1h-1zM986 58h1v1h-1zM989 58h1v1h-1zM986 59h1v1h-1zM989 59h1v1h-1zM986 60h1v1h-1zM989 60h1v1h-1zM987 61h2v1h-2zM992 55h2v1h-2zM991 56h1v1h-1zM994 56h1v1h-1zM991 57h1v1h-1zM994 57h1v1h-1zM991 58h1v1h-1zM994 58h1v1h-1zM991 59h1v1h-1zM994 59h1v1h-1zM991 60h1v1h-1zM994 60h1v1h-1zM992 61h2v1h-2zM184 111h4v1h-4zM184 112h1v1h-1zM188 112h1v1h-1zM184 113h1v1h-1zM188 113h1v1h-1zM184 114h1v1h-1zM188 114h1v1h-1zM184 115h1v1h-1zM188 115h1v1h-1zM184 116h1v1h-1zM188 116h1v1h-1zM184 117h4v1h-4zM732 531h1v1h-1zM738 531h1v1h-1zM732 532h2v1h-2zM737 532h2v1h-2zM732 533h2v1h-2zM737 533h2v1h-2zM732 534h1v1h-1zM734 534h1v1h-1zM736 534h1v1h-1zM738 534h1v1h-1zM732 535h1v1h-1zM734 535h1v1h-1zM736 535h1v1h-1zM738 535h1v1h-1zM732 536h1v1h-1zM735 536h1v1h-1zM738 536h1v1h-1zM732 537h1v1h-1zM735 537h1v1h-1zM738 537h1v1h-1z" fill="#dc1c1c" shape-rendering="crispEdges"/><path d="M58 616h2v1h-2zM57 617h1v1h-1zM60 617h1v1h-1zM57 618h1v1h-1zM60 618h1v1h-1zM57 619h1v1h-1zM60 619h1v1h-1zM57 620h1v1h-1zM60 620h1v1h-1zM57 621h1v1h-1zM60 621h1v1h-1zM58 622h2v1h-2zM168 616h1v1h-1zM167 617h2v1h-2zM168 618h1v1h-1zM168 619h1v1h-1zM168 620h1v1h-1zM168 621h1v1h-1zM168 622h1v1h-1zM171 616h4v1h-4zM171 617h1v1h-1zM171 618h3v1h-3zM174 619h1v1h-1zM174 620h1v1h-1zM171 621h1v1h-1zM174 621h1v1h-1zM172 622h2v1h-2zM279 616h2v1h-2zM278 617h1v1h-1zM281 617h1v1h-1zM281 618h1v1h-1zM279 619h2v1h-2zM281 620h1v1h-1zM278 621h1v1h-1zM281 621h1v1h-1zM279 622h2v1h-2zM284 616h2v1h-2zM283 617h1v1h-1zM286 617h1v1h-1zM283 618h1v1h-1zM286 618h1v1h-1zM283 619h1v1h-1zM286 619h1v1h-1zM283 620h1v1h-1zM286 620h1v1h-1zM283 621h1v1h-1zM286 621h1v1h-1zM284 622h2v1h-2zM392 616h1v1h-1zM391 617h2v1h-2zM390 618h1v1h-1zM392 618h1v1h-1zM389 619h1v1h-1zM392 619h1v1h-1zM389 620h5v1h-5zM392 621h1v1h-1zM392 622h1v1h-1zM394 616h4v1h-4zM394 617h1v1h-1zM394 618h3v1h-3zM397 619h1v1h-1zM397 620h1v1h-1zM394 621h1v1h-1zM397 621h1v1h-1zM395 622h2v1h-2zM502 616h2v1h-2zM501 617h1v1h-1zM501 618h3v1h-3zM501 619h1v1h-1zM504 619h1v1h-1zM501 620h1v1h-1zM504 620h1v1h-1zM501 621h1v1h-1zM504 621h1v1h-1zM502 622h2v1h-2zM507 616h2v1h-2zM506 617h1v1h-1zM509 617h1v1h-1zM506 618h1v1h-1zM509 618h1v1h-1zM506 619h1v1h-1zM509 619h1v1h-1zM506 620h1v1h-1zM509 620h1v1h-1zM506 621h1v1h-1zM509 621h1v1h-1zM507 622h2v1h-2zM612 616h4v1h-4zM615 617h1v1h-1zM614 618h1v1h-1zM614 619h1v1h-1zM613 620h1v1h-1zM613 621h1v1h-1zM613 622h1v1h-1zM617 616h4v1h-4zM617 617h1v1h-1zM617 618h3v1h-3zM620 619h1v1h-1zM620 620h1v1h-1zM617 621h1v1h-1zM620 621h1v1h-1zM618 622h2v1h-2zM725 616h2v1h-2zM724 617h1v1h-1zM727 617h1v1h-1zM724 618h1v1h-1zM727 618h1v1h-1zM724 619h1v1h-1zM727 619h1v1h-1zM725 620h3v1h-3zM727 621h1v1h-1zM725 622h2v1h-2zM730 616h2v1h-2zM729 617h1v1h-1zM732 617h1v1h-1zM729 618h1v1h-1zM732 618h1v1h-1zM729 619h1v1h-1zM732 619h1v1h-1zM729 620h1v1h-1zM732 620h1v1h-1zM729 621h1v1h-1zM732 621h1v1h-1zM730 622h2v1h-2zM834 616h1v1h-1zM833 617h2v1h-2zM834 618h1v1h-1zM834 619h1v1h-1zM834 620h1v1h-1zM834 621h1v1h-1zM834 622h1v1h-1zM838 616h2v1h-2zM837 617h1v1h-1zM840 617h1v1h-1zM837 618h1v1h-1zM840 618h1v1h-1zM837 619h1v1h-1zM840 619h1v1h-1zM837 620h1v1h-1zM840 620h1v1h-1zM837 621h1v1h-1zM840 621h1v1h-1zM838 622h2v1h-2zM842 616h4v1h-4zM842 617h1v1h-1zM842 618h3v1h-3zM845 619h1v1h-1zM845 620h1v1h-1zM842 621h1v1h-1zM845 621h1v1h-1zM843 622h2v1h-2zM946 616h1v1h-1zM945 617h2v1h-2zM946 618h1v1h-1zM946 619h1v1h-1zM946 620h1v1h-1zM946 621h1v1h-1zM946 622h1v1h-1zM950 616h2v1h-2zM949 617h1v1h-1zM952 617h1v1h-1zM952 618h1v1h-1zM951 619h1v1h-1zM950 620h1v1h-1zM949 621h1v1h-1zM949 622h4v1h-4zM955 616h2v1h-2zM954 617h1v1h-1zM957 617h1v1h-1zM954 618h1v1h-1zM957 618h1v1h-1zM954 619h1v1h-1zM957 619h1v1h-1zM954 620h1v1h-1zM957 620h1v1h-1zM954 621h1v1h-1zM957 621h1v1h-1zM955 622h2v1h-2z" fill="#000" shape-rendering="crispEdges"/></svg>
<div style="position:absolute;left:32px;top:640px;white-space:pre;"><b style="text-decoration:underline;letter-spacing:0.45px">Statistics:</b></div>
<div style="position:absolute;left:-109px;width:200px;text-align:right;top:661px;white-space:pre;letter-spacing:0px">Apogee Alt:</div>
<div style="position:absolute;left:96.6px;top:661px;white-space:pre;letter-spacing:-0.35px">4661' AGL</div>
<div style="position:absolute;left:-109px;width:200px;text-align:right;top:684px;white-space:pre;letter-spacing:-0.22px">Ground Elev:</div>
<div style="position:absolute;left:96.6px;top:684px;white-space:pre;letter-spacing:-0.2px">-198' MSL</div>
<div style="position:absolute;left:-109px;width:200px;text-align:right;top:707px;white-space:pre;letter-spacing:-0.42px">NumSamps:</div>
<div style="position:absolute;left:96.6px;top:707px;white-space:pre;letter-spacing:0px">2432</div>
<div style="position:absolute;left:-109px;width:200px;text-align:right;top:730px;white-space:pre;letter-spacing:0px">Main Deploy:</div>
<div style="position:absolute;left:96.6px;top:730px;white-space:pre;letter-spacing:0px">500' AGL</div>
<div style="position:absolute;left:-109px;width:200px;text-align:right;top:753px;white-space:pre;letter-spacing:0px">Apogee Delay:</div>
<div style="position:absolute;left:96.6px;top:753px;white-space:pre;letter-spacing:0px">0 SEC</div>
<div style="position:absolute;left:-109px;width:200px;text-align:right;top:776px;white-space:pre;letter-spacing:0px">FlightNum:</div>
<div style="position:absolute;left:96.6px;top:776px;white-space:pre;letter-spacing:0px">11</div>
<div style="position:absolute;left:175px;top:640px;white-space:pre;"><b style="text-decoration:underline;letter-spacing:0.3px">Displayed</b></div>
<svg width="13" height="13" style="position:absolute;left:175px;top:659px" shape-rendering="crispEdges"><rect x="0" y="0" width="13" height="13" fill="#fff"/><rect x="0" y="0" width="12" height="1" fill="#808080"/><rect x="0" y="0" width="1" height="12" fill="#808080"/><rect x="1" y="1" width="10" height="1" fill="#404040"/><rect x="1" y="1" width="1" height="10" fill="#404040"/><rect x="1" y="11" width="11" height="1" fill="#d4d0c8"/><rect x="11" y="1" width="1" height="11" fill="#d4d0c8"/></svg>
<div style="position:absolute;left:193px;top:660px;white-space:pre;">Raw Altitude</div>
<svg width="13" height="13" style="position:absolute;left:175px;top:682px" shape-rendering="crispEdges"><rect x="0" y="0" width="13" height="13" fill="#fff"/><rect x="0" y="0" width="12" height="1" fill="#808080"/><rect x="0" y="0" width="1" height="12" fill="#808080"/><rect x="1" y="1" width="10" height="1" fill="#404040"/><rect x="1" y="1" width="1" height="10" fill="#404040"/><rect x="1" y="11" width="11" height="1" fill="#d4d0c8"/><rect x="11" y="1" width="1" height="11" fill="#d4d0c8"/><rect x="9" y="3" width="1" height="1" fill="#000"/><rect x="8" y="4" width="1" height="1" fill="#000"/><rect x="9" y="4" width="1" height="1" fill="#000"/><rect x="3" y="5" width="1" height="1" fill="#000"/><rect x="7" y="5" width="1" height="1" fill="#000"/><rect x="8" y="5" width="1" height="1" fill="#000"/><rect x="9" y="5" width="1" height="1" fill="#000"/><rect x="3" y="6" width="1" height="1" fill="#000"/><rect x="4" y="6" width="1" height="1" fill="#000"/><rect x="6" y="6" width="1" height="1" fill="#000"/><rect x="7" y="6" width="1" height="1" fill="#000"/><rect x="8" y="6" width="1" height="1" fill="#000"/><rect x="3" y="7" width="1" height="1" fill="#000"/><rect x="4" y="7" width="1" height="1" fill="#000"/><rect x="5" y="7" width="1" height="1" fill="#000"/><rect x="6" y="7" width="1" height="1" fill="#000"/><rect x="7" y="7" width="1" height="1" fill="#000"/><rect x="4" y="8" width="1" height="1" fill="#000"/><rect x="5" y="8" width="1" height="1" fill="#000"/><rect x="6" y="8" width="1" height="1" fill="#000"/><rect x="5" y="9" width="1" height="1" fill="#000"/></svg>
<div style="position:absolute;left:193px;top:683px;white-space:pre;">Smoothed Alt</div>
<svg width="13" height="13" style="position:absolute;left:175px;top:706px" shape-rendering="crispEdges"><rect x="0" y="0" width="13" height="13" fill="#fff"/><rect x="0" y="0" width="12" height="1" fill="#808080"/><rect x="0" y="0" width="1" height="12" fill="#808080"/><rect x="1" y="1" width="10" height="1" fill="#404040"/><rect x="1" y="1" width="1" height="10" fill="#404040"/><rect x="1" y="11" width="11" height="1" fill="#d4d0c8"/><rect x="11" y="1" width="1" height="11" fill="#d4d0c8"/><rect x="9" y="3" width="1" height="1" fill="#000"/><rect x="8" y="4" width="1" height="1" fill="#000"/><rect x="9" y="4" width="1" height="1" fill="#000"/><rect x="3" y="5" width="1" height="1" fill="#000"/><rect x="7" y="5" width="1" height="1" fill="#000"/><rect x="8" y="5" width="1" height="1" fill="#000"/><rect x="9" y="5" width="1" height="1" fill="#000"/><rect x="3" y="6" width="1" height="1" fill="#000"/><rect x="4" y="6" width="1" height="1" fill="#000"/><rect x="6" y="6" width="1" height="1" fill="#000"/><rect x="7" y="6" width="1" height="1" fill="#000"/><rect x="8" y="6" width="1" height="1" fill="#000"/><rect x="3" y="7" width="1" height="1" fill="#000"/><rect x="4" y="7" width="1" height="1" fill="#000"/><rect x="5" y="7" width="1" height="1" fill="#000"/><rect x="6" y="7" width="1" height="1" fill="#000"/><rect x="7" y="7" width="1" height="1" fill="#000"/><rect x="4" y="8" width="1" height="1" fill="#000"/><rect x="5" y="8" width="1" height="1" fill="#000"/><rect x="6" y="8" width="1" height="1" fill="#000"/><rect x="5" y="9" width="1" height="1" fill="#000"/></svg>
<svg width="12" height="12" style="position:absolute;left:197px;top:706px" shape-rendering="crispEdges"><rect x="4" y="2" width="1" height="1" fill="#fff"/><rect x="5" y="2" width="1" height="1" fill="#fff"/><rect x="6" y="2" width="1" height="1" fill="#fff"/><rect x="7" y="2" width="1" height="1" fill="#fff"/><rect x="3" y="3" width="1" height="1" fill="#fff"/><rect x="4" y="3" width="1" height="1" fill="#fff"/><rect x="5" y="3" width="1" height="1" fill="#fff"/><rect x="6" y="3" width="1" height="1" fill="#fff"/><rect x="7" y="3" width="1" height="1" fill="#fff"/><rect x="8" y="3" width="1" height="1" fill="#fff"/><rect x="2" y="4" width="1" height="1" fill="#fff"/><rect x="3" y="4" width="1" height="1" fill="#fff"/><rect x="4" y="4" width="1" height="1" fill="#fff"/><rect x="5" y="4" width="1" height="1" fill="#fff"/><rect x="6" y="4" width="1" height="1" fill="#fff"/><rect x="7" y="4" width="1" height="1" fill="#fff"/><rect x="8" y="4" width="1" height="1" fill="#fff"/><rect x="9" y="4" width="1" height="1" fill="#fff"/><rect x="2" y="5" width="1" height="1" fill="#fff"/><rect x="3" y="5" width="1" height="1" fill="#fff"/><rect x="4" y="5" width="1" height="1" fill="#fff"/><rect x="5" y="5" width="1" height="1" fill="#fff"/><rect x="6" y="5" width="1" height="1" fill="#fff"/><rect x="7" y="5" width="1" height="1" fill="#fff"/><rect x="8" y="5" width="1" height="1" fill="#fff"/><rect x="9" y="5" width="1" height="1" fill="#fff"/><rect x="2" y="6" width="1" height="1" fill="#fff"/><rect x="3" y="6" width="1" height="1" fill="#fff"/><rect x="4" y="6" width="1" height="1" fill="#fff"/><rect x="5" y="6" width="1" height="1" fill="#fff"/><rect x="6" y="6" width="1" height="1" fill="#fff"/><rect x="7" y="6" width="1" height="1" fill="#fff"/><rect x="8" y="6" width="1" height="1" fill="#fff"/><rect x="9" y="6" width="1" height="1" fill="#fff"/><rect x="2" y="7" width="1" height="1" fill="#fff"/><rect x="3" y="7" width="1" height="1" fill="#fff"/><rect x="4" y="7" width="1" height="1" fill="#fff"/><rect x="5" y="7" width="1" height="1" fill="#fff"/><rect x="6" y="7" width="1" height="1" fill="#fff"/><rect x="7" y="7" width="1" height="1" fill="#fff"/><rect x="8" y="7" width="1" height="1" fill="#fff"/><rect x="9" y="7" width="1" height="1" fill="#fff"/><rect x="3" y="8" width="1" height="1" fill="#fff"/><rect x="4" y="8" width="1" height="1" fill="#fff"/><rect x="5" y="8" width="1" height="1" fill="#fff"/><rect x="6" y="8" width="1" height="1" fill="#fff"/><rect x="7" y="8" width="1" height="1" fill="#fff"/><rect x="8" y="8" width="1" height="1" fill="#fff"/><rect x="4" y="9" width="1" height="1" fill="#fff"/><rect x="5" y="9" width="1" height="1" fill="#fff"/><rect x="6" y="9" width="1" height="1" fill="#fff"/><rect x="7" y="9" width="1" height="1" fill="#fff"/><rect x="4" y="0" width="1" height="1" fill="#808080"/><rect x="5" y="0" width="1" height="1" fill="#808080"/><rect x="6" y="0" width="1" height="1" fill="#808080"/><rect x="7" y="0" width="1" height="1" fill="#808080"/><rect x="2" y="1" width="1" height="1" fill="#808080"/><rect x="3" y="1" width="1" height="1" fill="#808080"/><rect x="8" y="1" width="1" height="1" fill="#808080"/><rect x="9" y="1" width="1" height="1" fill="#808080"/><rect x="1" y="2" width="1" height="1" fill="#808080"/><rect x="1" y="3" width="1" height="1" fill="#808080"/><rect x="0" y="4" width="1" height="1" fill="#808080"/><rect x="0" y="5" width="1" height="1" fill="#808080"/><rect x="0" y="6" width="1" height="1" fill="#808080"/><rect x="0" y="7" width="1" height="1" fill="#808080"/><rect x="1" y="8" width="1" height="1" fill="#808080"/><rect x="1" y="9" width="1" height="1" fill="#808080"/><rect x="10" y="2" width="1" height="1" fill="#fff"/><rect x="10" y="3" width="1" height="1" fill="#fff"/><rect x="11" y="4" width="1" height="1" fill="#fff"/><rect x="11" y="5" width="1" height="1" fill="#fff"/><rect x="11" y="6" width="1" height="1" fill="#fff"/><rect x="11" y="7" width="1" height="1" fill="#fff"/><rect x="10" y="8" width="1" height="1" fill="#fff"/><rect x="10" y="9" width="1" height="1" fill="#fff"/><rect x="2" y="10" width="1" height="1" fill="#fff"/><rect x="3" y="10" width="1" height="1" fill="#fff"/><rect x="8" y="10" width="1" height="1" fill="#fff"/><rect x="9" y="10" width="1" height="1" fill="#fff"/><rect x="4" y="11" width="1" height="1" fill="#fff"/><rect x="5" y="11" width="1" height="1" fill="#fff"/><rect x="6" y="11" width="1" height="1" fill="#fff"/><rect x="7" y="11" width="1" height="1" fill="#fff"/><rect x="4" y="1" width="1" height="1" fill="#404040"/><rect x="5" y="1" width="1" height="1" fill="#404040"/><rect x="6" y="1" width="1" height="1" fill="#404040"/><rect x="7" y="1" width="1" height="1" fill="#404040"/><rect x="2" y="2" width="1" height="1" fill="#404040"/><rect x="3" y="2" width="1" height="1" fill="#404040"/><rect x="8" y="2" width="1" height="1" fill="#404040"/><rect x="9" y="2" width="1" height="1" fill="#404040"/><rect x="2" y="3" width="1" height="1" fill="#404040"/><rect x="1" y="4" width="1" height="1" fill="#404040"/><rect x="1" y="5" width="1" height="1" fill="#404040"/><rect x="1" y="6" width="1" height="1" fill="#404040"/><rect x="1" y="7" width="1" height="1" fill="#404040"/><rect x="2" y="8" width="1" height="1" fill="#404040"/><rect x="9" y="3" width="1" height="1" fill="#d4d0c8"/><rect x="10" y="4" width="1" height="1" fill="#d4d0c8"/><rect x="10" y="5" width="1" height="1" fill="#d4d0c8"/><rect x="10" y="6" width="1" height="1" fill="#d4d0c8"/><rect x="10" y="7" width="1" height="1" fill="#d4d0c8"/><rect x="9" y="8" width="1" height="1" fill="#d4d0c8"/><rect x="2" y="9" width="1" height="1" fill="#d4d0c8"/><rect x="3" y="9" width="1" height="1" fill="#d4d0c8"/><rect x="8" y="9" width="1" height="1" fill="#d4d0c8"/><rect x="9" y="9" width="1" height="1" fill="#d4d0c8"/><rect x="4" y="10" width="1" height="1" fill="#d4d0c8"/><rect x="5" y="10" width="1" height="1" fill="#d4d0c8"/><rect x="6" y="10" width="1" height="1" fill="#d4d0c8"/><rect x="7" y="10" width="1" height="1" fill="#d4d0c8"/><rect x="5" y="4" width="1" height="1" fill="#000"/><rect x="6" y="4" width="1" height="1" fill="#000"/><rect x="4" y="5" width="1" height="1" fill="#000"/><rect x="5" y="5" width="1" height="1" fill="#000"/><rect x="6" y="5" width="1" height="1" fill="#000"/><rect x="7" y="5" width="1" height="1" fill="#000"/><rect x="4" y="6" width="1" height="1" fill="#000"/><rect x="5" y="6" width="1" height="1" fill="#000"/><rect x="6" y="6" width="1" height="1" fill="#000"/><rect x="7" y="6" width="1" height="1" fill="#000"/><rect x="5" y="7" width="1" height="1" fill="#000"/><rect x="6" y="7" width="1" height="1" fill="#000"/></svg>
<div style="position:absolute;left:215px;top:706px;white-space:pre;">Velocity</div>
<svg width="12" height="12" style="position:absolute;left:197px;top:729px" shape-rendering="crispEdges"><rect x="4" y="2" width="1" height="1" fill="#fff"/><rect x="5" y="2" width="1" height="1" fill="#fff"/><rect x="6" y="2" width="1" height="1" fill="#fff"/><rect x="7" y="2" width="1" height="1" fill="#fff"/><rect x="3" y="3" width="1" height="1" fill="#fff"/><rect x="4" y="3" width="1" height="1" fill="#fff"/><rect x="5" y="3" width="1" height="1" fill="#fff"/><rect x="6" y="3" width="1" height="1" fill="#fff"/><rect x="7" y="3" width="1" height="1" fill="#fff"/><rect x="8" y="3" width="1" height="1" fill="#fff"/><rect x="2" y="4" width="1" height="1" fill="#fff"/><rect x="3" y="4" width="1" height="1" fill="#fff"/><rect x="4" y="4" width="1" height="1" fill="#fff"/><rect x="5" y="4" width="1" height="1" fill="#fff"/><rect x="6" y="4" width="1" height="1" fill="#fff"/><rect x="7" y="4" width="1" height="1" fill="#fff"/><rect x="8" y="4" width="1" height="1" fill="#fff"/><rect x="9" y="4" width="1" height="1" fill="#fff"/><rect x="2" y="5" width="1" height="1" fill="#fff"/><rect x="3" y="5" width="1" height="1" fill="#fff"/><rect x="4" y="5" width="1" height="1" fill="#fff"/><rect x="5" y="5" width="1" height="1" fill="#fff"/><rect x="6" y="5" width="1" height="1" fill="#fff"/><rect x="7" y="5" width="1" height="1" fill="#fff"/><rect x="8" y="5" width="1" height="1" fill="#fff"/><rect x="9" y="5" width="1" height="1" fill="#fff"/><rect x="2" y="6" width="1" height="1" fill="#fff"/><rect x="3" y="6" width="1" height="1" fill="#fff"/><rect x="4" y="6" width="1" height="1" fill="#fff"/><rect x="5" y="6" width="1" height="1" fill="#fff"/><rect x="6" y="6" width="1" height="1" fill="#fff"/><rect x="7" y="6" width="1" height="1" fill="#fff"/><rect x="8" y="6" width="1" height="1" fill="#fff"/><rect x="9" y="6" width="1" height="1" fill="#fff"/><rect x="2" y="7" width="1" height="1" fill="#fff"/><rect x="3" y="7" width="1" height="1" fill="#fff"/><rect x="4" y="7" width="1" height="1" fill="#fff"/><rect x="5" y="7" width="1" height="1" fill="#fff"/><rect x="6" y="7" width="1" height="1" fill="#fff"/><rect x="7" y="7" width="1" height="1" fill="#fff"/><rect x="8" y="7" width="1" height="1" fill="#fff"/><rect x="9" y="7" width="1" height="1" fill="#fff"/><rect x="3" y="8" width="1" height="1" fill="#fff"/><rect x="4" y="8" width="1" height="1" fill="#fff"/><rect x="5" y="8" width="1" height="1" fill="#fff"/><rect x="6" y="8" width="1" height="1" fill="#fff"/><rect x="7" y="8" width="1" height="1" fill="#fff"/><rect x="8" y="8" width="1" height="1" fill="#fff"/><rect x="4" y="9" width="1" height="1" fill="#fff"/><rect x="5" y="9" width="1" height="1" fill="#fff"/><rect x="6" y="9" width="1" height="1" fill="#fff"/><rect x="7" y="9" width="1" height="1" fill="#fff"/><rect x="4" y="0" width="1" height="1" fill="#808080"/><rect x="5" y="0" width="1" height="1" fill="#808080"/><rect x="6" y="0" width="1" height="1" fill="#808080"/><rect x="7" y="0" width="1" height="1" fill="#808080"/><rect x="2" y="1" width="1" height="1" fill="#808080"/><rect x="3" y="1" width="1" height="1" fill="#808080"/><rect x="8" y="1" width="1" height="1" fill="#808080"/><rect x="9" y="1" width="1" height="1" fill="#808080"/><rect x="1" y="2" width="1" height="1" fill="#808080"/><rect x="1" y="3" width="1" height="1" fill="#808080"/><rect x="0" y="4" width="1" height="1" fill="#808080"/><rect x="0" y="5" width="1" height="1" fill="#808080"/><rect x="0" y="6" width="1" height="1" fill="#808080"/><rect x="0" y="7" width="1" height="1" fill="#808080"/><rect x="1" y="8" width="1" height="1" fill="#808080"/><rect x="1" y="9" width="1" height="1" fill="#808080"/><rect x="10" y="2" width="1" height="1" fill="#fff"/><rect x="10" y="3" width="1" height="1" fill="#fff"/><rect x="11" y="4" width="1" height="1" fill="#fff"/><rect x="11" y="5" width="1" height="1" fill="#fff"/><rect x="11" y="6" width="1" height="1" fill="#fff"/><rect x="11" y="7" width="1" height="1" fill="#fff"/><rect x="10" y="8" width="1" height="1" fill="#fff"/><rect x="10" y="9" width="1" height="1" fill="#fff"/><rect x="2" y="10" width="1" height="1" fill="#fff"/><rect x="3" y="10" width="1" height="1" fill="#fff"/><rect x="8" y="10" width="1" height="1" fill="#fff"/><rect x="9" y="10" width="1" height="1" fill="#fff"/><rect x="4" y="11" width="1" height="1" fill="#fff"/><rect x="5" y="11" width="1" height="1" fill="#fff"/><rect x="6" y="11" width="1" height="1" fill="#fff"/><rect x="7" y="11" width="1" height="1" fill="#fff"/><rect x="4" y="1" width="1" height="1" fill="#404040"/><rect x="5" y="1" width="1" height="1" fill="#404040"/><rect x="6" y="1" width="1" height="1" fill="#404040"/><rect x="7" y="1" width="1" height="1" fill="#404040"/><rect x="2" y="2" width="1" height="1" fill="#404040"/><rect x="3" y="2" width="1" height="1" fill="#404040"/><rect x="8" y="2" width="1" height="1" fill="#404040"/><rect x="9" y="2" width="1" height="1" fill="#404040"/><rect x="2" y="3" width="1" height="1" fill="#404040"/><rect x="1" y="4" width="1" height="1" fill="#404040"/><rect x="1" y="5" width="1" height="1" fill="#404040"/><rect x="1" y="6" width="1" height="1" fill="#404040"/><rect x="1" y="7" width="1" height="1" fill="#404040"/><rect x="2" y="8" width="1" height="1" fill="#404040"/><rect x="9" y="3" width="1" height="1" fill="#d4d0c8"/><rect x="10" y="4" width="1" height="1" fill="#d4d0c8"/><rect x="10" y="5" width="1" height="1" fill="#d4d0c8"/><rect x="10" y="6" width="1" height="1" fill="#d4d0c8"/><rect x="10" y="7" width="1" height="1" fill="#d4d0c8"/><rect x="9" y="8" width="1" height="1" fill="#d4d0c8"/><rect x="2" y="9" width="1" height="1" fill="#d4d0c8"/><rect x="3" y="9" width="1" height="1" fill="#d4d0c8"/><rect x="8" y="9" width="1" height="1" fill="#d4d0c8"/><rect x="9" y="9" width="1" height="1" fill="#d4d0c8"/><rect x="4" y="10" width="1" height="1" fill="#d4d0c8"/><rect x="5" y="10" width="1" height="1" fill="#d4d0c8"/><rect x="6" y="10" width="1" height="1" fill="#d4d0c8"/><rect x="7" y="10" width="1" height="1" fill="#d4d0c8"/></svg>
<div style="position:absolute;left:215px;top:729px;white-space:pre;">Temperature</div>
<svg width="12" height="12" style="position:absolute;left:197px;top:752px" shape-rendering="crispEdges"><rect x="4" y="2" width="1" height="1" fill="#fff"/><rect x="5" y="2" width="1" height="1" fill="#fff"/><rect x="6" y="2" width="1" height="1" fill="#fff"/><rect x="7" y="2" width="1" height="1" fill="#fff"/><rect x="3" y="3" width="1" height="1" fill="#fff"/><rect x="4" y="3" width="1" height="1" fill="#fff"/><rect x="5" y="3" width="1" height="1" fill="#fff"/><rect x="6" y="3" width="1" height="1" fill="#fff"/><rect x="7" y="3" width="1" height="1" fill="#fff"/><rect x="8" y="3" width="1" height="1" fill="#fff"/><rect x="2" y="4" width="1" height="1" fill="#fff"/><rect x="3" y="4" width="1" height="1" fill="#fff"/><rect x="4" y="4" width="1" height="1" fill="#fff"/><rect x="5" y="4" width="1" height="1" fill="#fff"/><rect x="6" y="4" width="1" height="1" fill="#fff"/><rect x="7" y="4" width="1" height="1" fill="#fff"/><rect x="8" y="4" width="1" height="1" fill="#fff"/><rect x="9" y="4" width="1" height="1" fill="#fff"/><rect x="2" y="5" width="1" height="1" fill="#fff"/><rect x="3" y="5" width="1" height="1" fill="#fff"/><rect x="4" y="5" width="1" height="1" fill="#fff"/><rect x="5" y="5" width="1" height="1" fill="#fff"/><rect x="6" y="5" width="1" height="1" fill="#fff"/><rect x="7" y="5" width="1" height="1" fill="#fff"/><rect x="8" y="5" width="1" height="1" fill="#fff"/><rect x="9" y="5" width="1" height="1" fill="#fff"/><rect x="2" y="6" width="1" height="1" fill="#fff"/><rect x="3" y="6" width="1" height="1" fill="#fff"/><rect x="4" y="6" width="1" height="1" fill="#fff"/><rect x="5" y="6" width="1" height="1" fill="#fff"/><rect x="6" y="6" width="1" height="1" fill="#fff"/><rect x="7" y="6" width="1" height="1" fill="#fff"/><rect x="8" y="6" width="1" height="1" fill="#fff"/><rect x="9" y="6" width="1" height="1" fill="#fff"/><rect x="2" y="7" width="1" height="1" fill="#fff"/><rect x="3" y="7" width="1" height="1" fill="#fff"/><rect x="4" y="7" width="1" height="1" fill="#fff"/><rect x="5" y="7" width="1" height="1" fill="#fff"/><rect x="6" y="7" width="1" height="1" fill="#fff"/><rect x="7" y="7" width="1" height="1" fill="#fff"/><rect x="8" y="7" width="1" height="1" fill="#fff"/><rect x="9" y="7" width="1" height="1" fill="#fff"/><rect x="3" y="8" width="1" height="1" fill="#fff"/><rect x="4" y="8" width="1" height="1" fill="#fff"/><rect x="5" y="8" width="1" height="1" fill="#fff"/><rect x="6" y="8" width="1" height="1" fill="#fff"/><rect x="7" y="8" width="1" height="1" fill="#fff"/><rect x="8" y="8" width="1" height="1" fill="#fff"/><rect x="4" y="9" width="1" height="1" fill="#fff"/><rect x="5" y="9" width="1" height="1" fill="#fff"/><rect x="6" y="9" width="1" height="1" fill="#fff"/><rect x="7" y="9" width="1" height="1" fill="#fff"/><rect x="4" y="0" width="1" height="1" fill="#808080"/><rect x="5" y="0" width="1" height="1" fill="#808080"/><rect x="6" y="0" width="1" height="1" fill="#808080"/><rect x="7" y="0" width="1" height="1" fill="#808080"/><rect x="2" y="1" width="1" height="1" fill="#808080"/><rect x="3" y="1" width="1" height="1" fill="#808080"/><rect x="8" y="1" width="1" height="1" fill="#808080"/><rect x="9" y="1" width="1" height="1" fill="#808080"/><rect x="1" y="2" width="1" height="1" fill="#808080"/><rect x="1" y="3" width="1" height="1" fill="#808080"/><rect x="0" y="4" width="1" height="1" fill="#808080"/><rect x="0" y="5" width="1" height="1" fill="#808080"/><rect x="0" y="6" width="1" height="1" fill="#808080"/><rect x="0" y="7" width="1" height="1" fill="#808080"/><rect x="1" y="8" width="1" height="1" fill="#808080"/><rect x="1" y="9" width="1" height="1" fill="#808080"/><rect x="10" y="2" width="1" height="1" fill="#fff"/><rect x="10" y="3" width="1" height="1" fill="#fff"/><rect x="11" y="4" width="1" height="1" fill="#fff"/><rect x="11" y="5" width="1" height="1" fill="#fff"/><rect x="11" y="6" width="1" height="1" fill="#fff"/><rect x="11" y="7" width="1" height="1" fill="#fff"/><rect x="10" y="8" width="1" height="1" fill="#fff"/><rect x="10" y="9" width="1" height="1" fill="#fff"/><rect x="2" y="10" width="1" height="1" fill="#fff"/><rect x="3" y="10" width="1" height="1" fill="#fff"/><rect x="8" y="10" width="1" height="1" fill="#fff"/><rect x="9" y="10" width="1" height="1" fill="#fff"/><rect x="4" y="11" width="1" height="1" fill="#fff"/><rect x="5" y="11" width="1" height="1" fill="#fff"/><rect x="6" y="11" width="1" height="1" fill="#fff"/><rect x="7" y="11" width="1" height="1" fill="#fff"/><rect x="4" y="1" width="1" height="1" fill="#404040"/><rect x="5" y="1" width="1" height="1" fill="#404040"/><rect x="6" y="1" width="1" height="1" fill="#404040"/><rect x="7" y="1" width="1" height="1" fill="#404040"/><rect x="2" y="2" width="1" height="1" fill="#404040"/><rect x="3" y="2" width="1" height="1" fill="#404040"/><rect x="8" y="2" width="1" height="1" fill="#404040"/><rect x="9" y="2" width="1" height="1" fill="#404040"/><rect x="2" y="3" width="1" height="1" fill="#404040"/><rect x="1" y="4" width="1" height="1" fill="#404040"/><rect x="1" y="5" width="1" height="1" fill="#404040"/><rect x="1" y="6" width="1" height="1" fill="#404040"/><rect x="1" y="7" width="1" height="1" fill="#404040"/><rect x="2" y="8" width="1" height="1" fill="#404040"/><rect x="9" y="3" width="1" height="1" fill="#d4d0c8"/><rect x="10" y="4" width="1" height="1" fill="#d4d0c8"/><rect x="10" y="5" width="1" height="1" fill="#d4d0c8"/><rect x="10" y="6" width="1" height="1" fill="#d4d0c8"/><rect x="10" y="7" width="1" height="1" fill="#d4d0c8"/><rect x="9" y="8" width="1" height="1" fill="#d4d0c8"/><rect x="2" y="9" width="1" height="1" fill="#d4d0c8"/><rect x="3" y="9" width="1" height="1" fill="#d4d0c8"/><rect x="8" y="9" width="1" height="1" fill="#d4d0c8"/><rect x="9" y="9" width="1" height="1" fill="#d4d0c8"/><rect x="4" y="10" width="1" height="1" fill="#d4d0c8"/><rect x="5" y="10" width="1" height="1" fill="#d4d0c8"/><rect x="6" y="10" width="1" height="1" fill="#d4d0c8"/><rect x="7" y="10" width="1" height="1" fill="#d4d0c8"/></svg>
<div style="position:absolute;left:215px;top:752px;white-space:pre;">Voltage</div>
<div style="position:absolute;left:403px;top:640px;white-space:pre;letter-spacing:-0.35px">Comments</div>
<div style="position:absolute;left:404px;top:656px;width:600px;height:100px;box-sizing:border-box;border-top:1px solid #808080;border-left:1px solid #808080;border-right:1px solid #fff;border-bottom:1px solid #fff;"><div style="position:absolute;left:0;top:0;right:0;bottom:0;border-top:1px solid #404040;border-left:1px solid #404040;border-right:1px solid #d4d0c8;border-bottom:1px solid #d4d0c8;background:#fff"></div></div>
<div style="position:absolute;left:406px;top:659px;white-space:pre;letter-spacing:-0.1px">Darkstar 3, CTI J760, 2 March 2013</div>
<div style="position:absolute;left:817px;top:771px;width:187px;height:22px;box-sizing:border-box;border:1px solid #000;background:#fff"></div>
<div style="position:absolute;left:826px;top:776px;white-space:pre;">Model:</div>
<div style="position:absolute;left:863px;top:776px;white-space:pre;">SL100</div>
<div style="position:absolute;left:918px;top:776px;white-space:pre;">Serial #:</div>
<div style="position:absolute;left:966px;top:776px;white-space:pre;">1439</div>
</body></html>
